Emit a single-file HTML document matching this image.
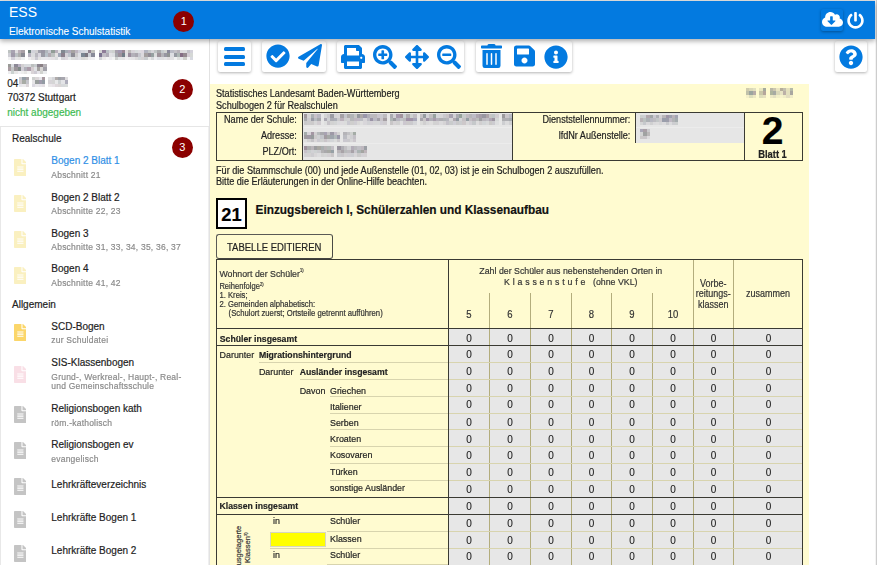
<!DOCTYPE html><html><head><meta charset="utf-8"><style>
html,body{margin:0;padding:0;}
body{width:877px;height:565px;overflow:hidden;position:relative;background:#fff;font-family:"Liberation Sans", sans-serif;}
.t{position:absolute;white-space:nowrap;-webkit-text-stroke:0.18px currentColor;}
svg{display:block}
</style></head><body><div style="position:absolute;left:0px;top:0px;width:877px;height:1px;background:#e4e4e4"></div><div style="position:absolute;left:875px;top:0px;width:1px;height:565px;background:#f3f3f3"></div><div style="position:absolute;left:876px;top:0px;width:1px;height:565px;background:#cdcdcd"></div><div style="position:absolute;left:209px;top:39px;width:1px;height:526px;background:#e2e2e2"></div><svg style="position:absolute;left:8px;top:49.7px;filter:blur(0.45px)" width="86.6" height="10.0" shape-rendering="crispEdges"><rect x="0.00" y="0.00" width="3.63" height="3.63" fill="rgb(189,194,193)"/><rect x="3.33" y="0.00" width="3.63" height="3.63" fill="rgb(168,163,177)"/><rect x="6.66" y="0.00" width="3.63" height="3.63" fill="rgb(224,222,224)"/><rect x="9.99" y="0.00" width="3.63" height="3.63" fill="rgb(187,177,184)"/><rect x="13.32" y="0.00" width="3.63" height="3.63" fill="rgb(168,160,166)"/><rect x="19.98" y="0.00" width="3.63" height="3.63" fill="rgb(112,129,128)"/><rect x="23.32" y="0.00" width="3.63" height="3.63" fill="rgb(210,211,218)"/><rect x="26.65" y="0.00" width="3.63" height="3.63" fill="rgb(210,209,211)"/><rect x="29.98" y="0.00" width="3.63" height="3.63" fill="rgb(162,161,171)"/><rect x="33.31" y="0.00" width="3.63" height="3.63" fill="rgb(153,150,164)"/><rect x="36.64" y="0.00" width="3.63" height="3.63" fill="rgb(177,182,188)"/><rect x="39.97" y="0.00" width="3.63" height="3.63" fill="rgb(203,202,210)"/><rect x="43.30" y="0.00" width="3.63" height="3.63" fill="rgb(145,157,150)"/><rect x="46.63" y="0.00" width="3.63" height="3.63" fill="rgb(186,178,188)"/><rect x="49.96" y="0.00" width="3.63" height="3.63" fill="rgb(225,225,227)"/><rect x="53.29" y="0.00" width="3.63" height="3.63" fill="rgb(129,136,145)"/><rect x="56.62" y="0.00" width="3.63" height="3.63" fill="rgb(165,170,180)"/><rect x="59.95" y="0.00" width="3.63" height="3.63" fill="rgb(179,170,186)"/><rect x="63.28" y="0.00" width="3.63" height="3.63" fill="rgb(167,163,162)"/><rect x="66.62" y="0.00" width="3.63" height="3.63" fill="rgb(189,180,191)"/><rect x="69.95" y="0.00" width="3.63" height="3.63" fill="rgb(207,206,216)"/><rect x="73.28" y="0.00" width="3.63" height="3.63" fill="rgb(213,213,220)"/><rect x="76.61" y="0.00" width="3.63" height="3.63" fill="rgb(219,220,225)"/><rect x="79.94" y="0.00" width="3.63" height="3.63" fill="rgb(147,133,147)"/><rect x="83.27" y="0.00" width="3.63" height="3.63" fill="rgb(194,194,190)"/><rect x="0.00" y="3.33" width="3.63" height="3.63" fill="rgb(207,207,213)"/><rect x="3.33" y="3.33" width="3.63" height="3.63" fill="rgb(161,155,170)"/><rect x="6.66" y="3.33" width="3.63" height="3.63" fill="rgb(189,193,196)"/><rect x="9.99" y="3.33" width="3.63" height="3.63" fill="rgb(174,174,172)"/><rect x="13.32" y="3.33" width="3.63" height="3.63" fill="rgb(137,138,147)"/><rect x="19.98" y="3.33" width="3.63" height="3.63" fill="rgb(185,180,193)"/><rect x="23.32" y="3.33" width="3.63" height="3.63" fill="rgb(219,220,222)"/><rect x="26.65" y="3.33" width="3.63" height="3.63" fill="rgb(186,185,192)"/><rect x="29.98" y="3.33" width="3.63" height="3.63" fill="rgb(217,214,223)"/><rect x="33.31" y="3.33" width="3.63" height="3.63" fill="rgb(156,156,166)"/><rect x="36.64" y="3.33" width="3.63" height="3.63" fill="rgb(184,192,200)"/><rect x="39.97" y="3.33" width="3.63" height="3.63" fill="rgb(178,171,178)"/><rect x="43.30" y="3.33" width="3.63" height="3.63" fill="rgb(189,194,192)"/><rect x="46.63" y="3.33" width="3.63" height="3.63" fill="rgb(228,226,226)"/><rect x="49.96" y="3.33" width="3.63" height="3.63" fill="rgb(162,169,183)"/><rect x="53.29" y="3.33" width="3.63" height="3.63" fill="rgb(139,128,141)"/><rect x="56.62" y="3.33" width="3.63" height="3.63" fill="rgb(213,210,216)"/><rect x="59.95" y="3.33" width="3.63" height="3.63" fill="rgb(190,195,203)"/><rect x="63.28" y="3.33" width="3.63" height="3.63" fill="rgb(143,141,150)"/><rect x="66.62" y="3.33" width="3.63" height="3.63" fill="rgb(204,202,203)"/><rect x="69.95" y="3.33" width="3.63" height="3.63" fill="rgb(224,224,229)"/><rect x="73.28" y="3.33" width="3.63" height="3.63" fill="rgb(123,133,146)"/><rect x="76.61" y="3.33" width="3.63" height="3.63" fill="rgb(122,117,128)"/><rect x="79.94" y="3.33" width="3.63" height="3.63" fill="rgb(205,208,214)"/><rect x="83.27" y="3.33" width="3.63" height="3.63" fill="rgb(137,139,153)"/><rect x="0.00" y="6.67" width="3.63" height="3.63" fill="rgb(241,241,242)"/><rect x="3.33" y="6.67" width="3.63" height="3.63" fill="rgb(211,208,217)"/><rect x="6.66" y="6.67" width="3.63" height="3.63" fill="rgb(231,231,231)"/><rect x="9.99" y="6.67" width="3.63" height="3.63" fill="rgb(229,227,227)"/><rect x="13.32" y="6.67" width="3.63" height="3.63" fill="rgb(238,240,241)"/><rect x="19.98" y="6.67" width="3.63" height="3.63" fill="rgb(239,239,240)"/><rect x="23.32" y="6.67" width="3.63" height="3.63" fill="rgb(229,227,229)"/><rect x="26.65" y="6.67" width="3.63" height="3.63" fill="rgb(203,202,210)"/><rect x="29.98" y="6.67" width="3.63" height="3.63" fill="rgb(227,227,226)"/><rect x="33.31" y="6.67" width="3.63" height="3.63" fill="rgb(232,232,235)"/><rect x="36.64" y="6.67" width="3.63" height="3.63" fill="rgb(233,231,236)"/><rect x="39.97" y="6.67" width="3.63" height="3.63" fill="rgb(229,229,233)"/><rect x="43.30" y="6.67" width="3.63" height="3.63" fill="rgb(228,225,228)"/><rect x="46.63" y="6.67" width="3.63" height="3.63" fill="rgb(218,221,222)"/><rect x="49.96" y="6.67" width="3.63" height="3.63" fill="rgb(244,243,245)"/><rect x="53.29" y="6.67" width="3.63" height="3.63" fill="rgb(213,211,216)"/><rect x="56.62" y="6.67" width="3.63" height="3.63" fill="rgb(222,217,223)"/><rect x="59.95" y="6.67" width="3.63" height="3.63" fill="rgb(232,234,235)"/><rect x="63.28" y="6.67" width="3.63" height="3.63" fill="rgb(221,222,222)"/><rect x="66.62" y="6.67" width="3.63" height="3.63" fill="rgb(218,217,222)"/><rect x="69.95" y="6.67" width="3.63" height="3.63" fill="rgb(225,224,229)"/><rect x="73.28" y="6.67" width="3.63" height="3.63" fill="rgb(217,216,215)"/><rect x="76.61" y="6.67" width="3.63" height="3.63" fill="rgb(223,221,220)"/><rect x="79.94" y="6.67" width="3.63" height="3.63" fill="rgb(239,237,239)"/><rect x="83.27" y="6.67" width="3.63" height="3.63" fill="rgb(241,241,243)"/></svg><svg style="position:absolute;left:99.2px;top:49.7px;filter:blur(0.45px)" width="94.2" height="10.0" shape-rendering="crispEdges"><rect x="0.00" y="0.00" width="3.55" height="3.63" fill="rgb(213,212,212)"/><rect x="3.25" y="0.00" width="3.55" height="3.63" fill="rgb(143,125,152)"/><rect x="6.50" y="0.00" width="3.55" height="3.63" fill="rgb(185,190,195)"/><rect x="9.74" y="0.00" width="3.55" height="3.63" fill="rgb(210,211,213)"/><rect x="12.99" y="0.00" width="3.55" height="3.63" fill="rgb(206,209,207)"/><rect x="16.24" y="0.00" width="3.55" height="3.63" fill="rgb(167,160,172)"/><rect x="19.49" y="0.00" width="3.55" height="3.63" fill="rgb(161,152,176)"/><rect x="22.74" y="0.00" width="3.55" height="3.63" fill="rgb(152,134,147)"/><rect x="25.99" y="0.00" width="3.55" height="3.63" fill="rgb(226,223,224)"/><rect x="29.23" y="0.00" width="3.55" height="3.63" fill="rgb(188,186,185)"/><rect x="32.48" y="0.00" width="3.55" height="3.63" fill="rgb(215,212,217)"/><rect x="35.73" y="0.00" width="3.55" height="3.63" fill="rgb(216,220,221)"/><rect x="38.98" y="0.00" width="3.55" height="3.63" fill="rgb(223,221,225)"/><rect x="42.23" y="0.00" width="3.55" height="3.63" fill="rgb(222,216,224)"/><rect x="45.48" y="0.00" width="3.55" height="3.63" fill="rgb(177,179,191)"/><rect x="48.72" y="0.00" width="3.55" height="3.63" fill="rgb(196,199,201)"/><rect x="51.97" y="0.00" width="3.55" height="3.63" fill="rgb(214,213,217)"/><rect x="55.22" y="0.00" width="3.55" height="3.63" fill="rgb(192,197,197)"/><rect x="58.47" y="0.00" width="3.55" height="3.63" fill="rgb(170,171,173)"/><rect x="61.72" y="0.00" width="3.55" height="3.63" fill="rgb(197,203,206)"/><rect x="64.97" y="0.00" width="3.55" height="3.63" fill="rgb(208,211,208)"/><rect x="68.21" y="0.00" width="3.55" height="3.63" fill="rgb(138,138,155)"/><rect x="71.46" y="0.00" width="3.55" height="3.63" fill="rgb(186,187,197)"/><rect x="74.71" y="0.00" width="3.55" height="3.63" fill="rgb(195,193,198)"/><rect x="77.96" y="0.00" width="3.55" height="3.63" fill="rgb(183,178,185)"/><rect x="81.21" y="0.00" width="3.55" height="3.63" fill="rgb(222,219,221)"/><rect x="84.46" y="0.00" width="3.55" height="3.63" fill="rgb(221,221,223)"/><rect x="87.70" y="0.00" width="3.55" height="3.63" fill="rgb(195,195,202)"/><rect x="90.95" y="0.00" width="3.55" height="3.63" fill="rgb(211,209,218)"/><rect x="0.00" y="3.33" width="3.55" height="3.63" fill="rgb(124,115,144)"/><rect x="3.25" y="3.33" width="3.55" height="3.63" fill="rgb(193,189,198)"/><rect x="6.50" y="3.33" width="3.55" height="3.63" fill="rgb(177,172,183)"/><rect x="9.74" y="3.33" width="3.55" height="3.63" fill="rgb(227,226,229)"/><rect x="12.99" y="3.33" width="3.55" height="3.63" fill="rgb(221,222,225)"/><rect x="16.24" y="3.33" width="3.55" height="3.63" fill="rgb(165,168,174)"/><rect x="19.49" y="3.33" width="3.55" height="3.63" fill="rgb(158,147,156)"/><rect x="22.74" y="3.33" width="3.55" height="3.63" fill="rgb(113,125,135)"/><rect x="25.99" y="3.33" width="3.55" height="3.63" fill="rgb(226,225,227)"/><rect x="29.23" y="3.33" width="3.55" height="3.63" fill="rgb(155,141,157)"/><rect x="32.48" y="3.33" width="3.55" height="3.63" fill="rgb(179,177,185)"/><rect x="35.73" y="3.33" width="3.55" height="3.63" fill="rgb(171,167,175)"/><rect x="38.98" y="3.33" width="3.55" height="3.63" fill="rgb(199,199,206)"/><rect x="42.23" y="3.33" width="3.55" height="3.63" fill="rgb(219,217,221)"/><rect x="45.48" y="3.33" width="3.55" height="3.63" fill="rgb(164,159,159)"/><rect x="48.72" y="3.33" width="3.55" height="3.63" fill="rgb(147,141,151)"/><rect x="51.97" y="3.33" width="3.55" height="3.63" fill="rgb(149,160,160)"/><rect x="55.22" y="3.33" width="3.55" height="3.63" fill="rgb(219,221,221)"/><rect x="58.47" y="3.33" width="3.55" height="3.63" fill="rgb(157,147,154)"/><rect x="61.72" y="3.33" width="3.55" height="3.63" fill="rgb(179,179,184)"/><rect x="64.97" y="3.33" width="3.55" height="3.63" fill="rgb(151,151,162)"/><rect x="68.21" y="3.33" width="3.55" height="3.63" fill="rgb(144,148,147)"/><rect x="71.46" y="3.33" width="3.55" height="3.63" fill="rgb(221,222,226)"/><rect x="74.71" y="3.33" width="3.55" height="3.63" fill="rgb(151,154,162)"/><rect x="77.96" y="3.33" width="3.55" height="3.63" fill="rgb(173,182,180)"/><rect x="81.21" y="3.33" width="3.55" height="3.63" fill="rgb(133,109,132)"/><rect x="84.46" y="3.33" width="3.55" height="3.63" fill="rgb(149,137,144)"/><rect x="87.70" y="3.33" width="3.55" height="3.63" fill="rgb(210,203,210)"/><rect x="90.95" y="3.33" width="3.55" height="3.63" fill="rgb(213,216,214)"/><rect x="0.00" y="6.67" width="3.55" height="3.63" fill="rgb(209,211,214)"/><rect x="3.25" y="6.67" width="3.55" height="3.63" fill="rgb(236,234,234)"/><rect x="6.50" y="6.67" width="3.55" height="3.63" fill="rgb(244,244,244)"/><rect x="9.74" y="6.67" width="3.55" height="3.63" fill="rgb(238,237,240)"/><rect x="12.99" y="6.67" width="3.55" height="3.63" fill="rgb(244,245,244)"/><rect x="16.24" y="6.67" width="3.55" height="3.63" fill="rgb(206,207,206)"/><rect x="19.49" y="6.67" width="3.55" height="3.63" fill="rgb(227,230,230)"/><rect x="22.74" y="6.67" width="3.55" height="3.63" fill="rgb(228,227,228)"/><rect x="25.99" y="6.67" width="3.55" height="3.63" fill="rgb(241,239,242)"/><rect x="29.23" y="6.67" width="3.55" height="3.63" fill="rgb(232,233,234)"/><rect x="32.48" y="6.67" width="3.55" height="3.63" fill="rgb(230,229,231)"/><rect x="35.73" y="6.67" width="3.55" height="3.63" fill="rgb(220,219,220)"/><rect x="38.98" y="6.67" width="3.55" height="3.63" fill="rgb(209,214,216)"/><rect x="42.23" y="6.67" width="3.55" height="3.63" fill="rgb(213,209,211)"/><rect x="45.48" y="6.67" width="3.55" height="3.63" fill="rgb(200,203,206)"/><rect x="48.72" y="6.67" width="3.55" height="3.63" fill="rgb(232,233,232)"/><rect x="51.97" y="6.67" width="3.55" height="3.63" fill="rgb(214,216,218)"/><rect x="55.22" y="6.67" width="3.55" height="3.63" fill="rgb(236,236,239)"/><rect x="58.47" y="6.67" width="3.55" height="3.63" fill="rgb(221,224,228)"/><rect x="61.72" y="6.67" width="3.55" height="3.63" fill="rgb(223,223,225)"/><rect x="64.97" y="6.67" width="3.55" height="3.63" fill="rgb(227,228,230)"/><rect x="68.21" y="6.67" width="3.55" height="3.63" fill="rgb(222,220,222)"/><rect x="71.46" y="6.67" width="3.55" height="3.63" fill="rgb(226,225,227)"/><rect x="74.71" y="6.67" width="3.55" height="3.63" fill="rgb(241,242,242)"/><rect x="77.96" y="6.67" width="3.55" height="3.63" fill="rgb(223,224,223)"/><rect x="81.21" y="6.67" width="3.55" height="3.63" fill="rgb(231,232,234)"/><rect x="84.46" y="6.67" width="3.55" height="3.63" fill="rgb(206,206,202)"/><rect x="87.70" y="6.67" width="3.55" height="3.63" fill="rgb(243,243,244)"/><rect x="90.95" y="6.67" width="3.55" height="3.63" fill="rgb(215,217,224)"/></svg><svg style="position:absolute;left:8px;top:64px;filter:blur(0.45px)" width="38.7" height="10.0" shape-rendering="crispEdges"><rect x="0.00" y="0.00" width="3.52" height="3.63" fill="rgb(154,155,151)"/><rect x="3.23" y="0.00" width="3.52" height="3.63" fill="rgb(217,219,223)"/><rect x="6.45" y="0.00" width="3.52" height="3.63" fill="rgb(140,137,150)"/><rect x="9.68" y="0.00" width="3.52" height="3.63" fill="rgb(185,177,193)"/><rect x="12.90" y="0.00" width="3.52" height="3.63" fill="rgb(210,208,209)"/><rect x="16.12" y="0.00" width="3.52" height="3.63" fill="rgb(216,218,222)"/><rect x="19.35" y="0.00" width="3.52" height="3.63" fill="rgb(216,219,222)"/><rect x="22.57" y="0.00" width="3.52" height="3.63" fill="rgb(188,192,191)"/><rect x="25.80" y="0.00" width="3.52" height="3.63" fill="rgb(200,204,206)"/><rect x="29.03" y="0.00" width="3.52" height="3.63" fill="rgb(141,134,145)"/><rect x="32.25" y="0.00" width="3.52" height="3.63" fill="rgb(138,128,132)"/><rect x="35.48" y="0.00" width="3.52" height="3.63" fill="rgb(182,178,183)"/><rect x="0.00" y="3.33" width="3.52" height="3.63" fill="rgb(170,157,162)"/><rect x="3.23" y="3.33" width="3.52" height="3.63" fill="rgb(195,197,198)"/><rect x="6.45" y="3.33" width="3.52" height="3.63" fill="rgb(155,149,153)"/><rect x="9.68" y="3.33" width="3.52" height="3.63" fill="rgb(128,138,136)"/><rect x="12.90" y="3.33" width="3.52" height="3.63" fill="rgb(210,206,215)"/><rect x="16.12" y="3.33" width="3.52" height="3.63" fill="rgb(176,176,185)"/><rect x="19.35" y="3.33" width="3.52" height="3.63" fill="rgb(171,156,169)"/><rect x="22.57" y="3.33" width="3.52" height="3.63" fill="rgb(213,205,209)"/><rect x="25.80" y="3.33" width="3.52" height="3.63" fill="rgb(224,226,229)"/><rect x="29.03" y="3.33" width="3.52" height="3.63" fill="rgb(165,163,161)"/><rect x="32.25" y="3.33" width="3.52" height="3.63" fill="rgb(215,213,211)"/><rect x="35.48" y="3.33" width="3.52" height="3.63" fill="rgb(161,160,168)"/><rect x="0.00" y="6.67" width="3.52" height="3.63" fill="rgb(237,237,239)"/><rect x="3.23" y="6.67" width="3.52" height="3.63" fill="rgb(203,210,208)"/><rect x="6.45" y="6.67" width="3.52" height="3.63" fill="rgb(232,232,232)"/><rect x="9.68" y="6.67" width="3.52" height="3.63" fill="rgb(243,242,245)"/><rect x="12.90" y="6.67" width="3.52" height="3.63" fill="rgb(237,238,237)"/><rect x="16.12" y="6.67" width="3.52" height="3.63" fill="rgb(230,229,228)"/><rect x="19.35" y="6.67" width="3.52" height="3.63" fill="rgb(243,244,244)"/><rect x="22.57" y="6.67" width="3.52" height="3.63" fill="rgb(218,213,216)"/><rect x="25.80" y="6.67" width="3.52" height="3.63" fill="rgb(207,204,212)"/><rect x="29.03" y="6.67" width="3.52" height="3.63" fill="rgb(231,230,235)"/><rect x="32.25" y="6.67" width="3.52" height="3.63" fill="rgb(209,211,207)"/><rect x="35.48" y="6.67" width="3.52" height="3.63" fill="rgb(235,237,238)"/></svg><svg style="position:absolute;left:19.4px;top:77px;filter:blur(0.45px)" width="49.0" height="10.0" shape-rendering="crispEdges"><rect x="0.00" y="0.00" width="3.57" height="3.63" fill="rgb(199,200,205)"/><rect x="3.27" y="0.00" width="3.57" height="3.63" fill="rgb(149,159,167)"/><rect x="6.53" y="0.00" width="3.57" height="3.63" fill="rgb(168,164,168)"/><rect x="13.07" y="0.00" width="3.57" height="3.63" fill="rgb(206,209,207)"/><rect x="16.33" y="0.00" width="3.57" height="3.63" fill="rgb(219,215,217)"/><rect x="19.60" y="0.00" width="3.57" height="3.63" fill="rgb(231,230,235)"/><rect x="22.87" y="0.00" width="3.57" height="3.63" fill="rgb(167,153,159)"/><rect x="29.40" y="0.00" width="3.57" height="3.63" fill="rgb(226,227,228)"/><rect x="32.67" y="0.00" width="3.57" height="3.63" fill="rgb(213,214,218)"/><rect x="35.93" y="0.00" width="3.57" height="3.63" fill="rgb(176,172,171)"/><rect x="39.20" y="0.00" width="3.57" height="3.63" fill="rgb(159,162,167)"/><rect x="42.47" y="0.00" width="3.57" height="3.63" fill="rgb(167,166,174)"/><rect x="45.73" y="0.00" width="3.57" height="3.63" fill="rgb(223,221,223)"/><rect x="0.00" y="3.33" width="3.57" height="3.63" fill="rgb(205,200,202)"/><rect x="3.27" y="3.33" width="3.57" height="3.63" fill="rgb(168,172,166)"/><rect x="6.53" y="3.33" width="3.57" height="3.63" fill="rgb(197,197,203)"/><rect x="13.07" y="3.33" width="3.57" height="3.63" fill="rgb(230,229,231)"/><rect x="16.33" y="3.33" width="3.57" height="3.63" fill="rgb(153,158,157)"/><rect x="19.60" y="3.33" width="3.57" height="3.63" fill="rgb(159,155,172)"/><rect x="22.87" y="3.33" width="3.57" height="3.63" fill="rgb(146,154,163)"/><rect x="29.40" y="3.33" width="3.57" height="3.63" fill="rgb(215,212,216)"/><rect x="32.67" y="3.33" width="3.57" height="3.63" fill="rgb(213,213,213)"/><rect x="35.93" y="3.33" width="3.57" height="3.63" fill="rgb(232,233,234)"/><rect x="39.20" y="3.33" width="3.57" height="3.63" fill="rgb(205,209,211)"/><rect x="42.47" y="3.33" width="3.57" height="3.63" fill="rgb(227,228,231)"/><rect x="45.73" y="3.33" width="3.57" height="3.63" fill="rgb(174,174,188)"/><rect x="0.00" y="6.67" width="3.57" height="3.63" fill="rgb(231,231,236)"/><rect x="3.27" y="6.67" width="3.57" height="3.63" fill="rgb(236,235,237)"/><rect x="6.53" y="6.67" width="3.57" height="3.63" fill="rgb(220,215,218)"/><rect x="13.07" y="6.67" width="3.57" height="3.63" fill="rgb(220,218,226)"/><rect x="16.33" y="6.67" width="3.57" height="3.63" fill="rgb(233,231,235)"/><rect x="19.60" y="6.67" width="3.57" height="3.63" fill="rgb(229,228,233)"/><rect x="22.87" y="6.67" width="3.57" height="3.63" fill="rgb(227,222,227)"/><rect x="29.40" y="6.67" width="3.57" height="3.63" fill="rgb(234,232,234)"/><rect x="32.67" y="6.67" width="3.57" height="3.63" fill="rgb(231,226,231)"/><rect x="35.93" y="6.67" width="3.57" height="3.63" fill="rgb(222,216,219)"/><rect x="39.20" y="6.67" width="3.57" height="3.63" fill="rgb(218,214,214)"/><rect x="42.47" y="6.67" width="3.57" height="3.63" fill="rgb(214,217,219)"/><rect x="45.73" y="6.67" width="3.57" height="3.63" fill="rgb(216,220,219)"/></svg><div class="t" style="left:7.20px;top:78.83px;font-size:10px;line-height:10.0px;color:#222;font-weight:400;">04</div><div class="t" style="left:7.50px;top:92.83px;font-size:10px;line-height:10.0px;color:#222;font-weight:400;">70372 Stuttgart</div><div class="t" style="left:7.20px;top:107.83px;font-size:10px;line-height:10.0px;color:#3dbb52;font-weight:400;">nicht abgegeben</div><div style="position:absolute;left:0px;top:126px;width:209px;height:1px;background:#e6e6e6"></div><div style="position:absolute;left:0px;top:127px;width:1px;height:438px;background:#e8e8e8"></div><div style="position:absolute;left:208px;top:127px;width:1px;height:438px;background:#efefef"></div><div class="t" style="left:12.00px;top:133.84px;font-size:10px;line-height:10.0px;color:#222;font-weight:400;">Realschule</div><div class="t" style="left:51.30px;top:155.84px;font-size:10px;line-height:10.0px;color:#2f8fe6;font-weight:400;">Bogen 2 Blatt 1</div><div class="t" style="left:51.30px;top:171.10px;font-size:8.5px;line-height:8.5px;color:#8a8a8a;font-weight:400;letter-spacing:0.22px;transform:scaleY(1.1);transform-origin:0 7.20px;">Abschnitt 21</div><svg style="position:absolute;left:13.6px;top:158.7px" width="12.75" height="17" viewBox="0 0 384 512"><path fill="#faf0c0" d="M224 136V0H24C10.7 0 0 10.7 0 24v464c0 13.3 10.7 24 24 24h336c13.3 0 24-10.7 24-24V160H248c-13.2 0-24-10.8-24-24zm64 236c0 6.6-5.4 12-12 12H108c-6.6 0-12-5.4-12-12v-8c0-6.6 5.4-12 12-12h168c6.6 0 12 5.4 12 12v8zm0-64c0 6.6-5.4 12-12 12H108c-6.6 0-12-5.4-12-12v-8c0-6.6 5.4-12 12-12h168c6.6 0 12 5.4 12 12v8zm0-72v8c0 6.6-5.4 12-12 12H108c-6.6 0-12-5.4-12-12v-8c0-6.6 5.4-12 12-12h168c6.6 0 12 5.4 12 12zm96-114.1v6.1H256V0h6.1c6.4 0 12.5 2.5 17 7l97.9 98c4.5 4.5 7 10.6 7 16.9z"/></svg><div class="t" style="left:51.30px;top:192.84px;font-size:10px;line-height:10.0px;color:#222;font-weight:400;">Bogen 2 Blatt 2</div><div class="t" style="left:51.30px;top:207.10px;font-size:8.5px;line-height:8.5px;color:#8a8a8a;font-weight:400;letter-spacing:0.22px;transform:scaleY(1.1);transform-origin:0 7.20px;">Abschnitte 22, 23</div><svg style="position:absolute;left:13.6px;top:194.6px" width="12.75" height="17" viewBox="0 0 384 512"><path fill="#faf0c0" d="M224 136V0H24C10.7 0 0 10.7 0 24v464c0 13.3 10.7 24 24 24h336c13.3 0 24-10.7 24-24V160H248c-13.2 0-24-10.8-24-24zm64 236c0 6.6-5.4 12-12 12H108c-6.6 0-12-5.4-12-12v-8c0-6.6 5.4-12 12-12h168c6.6 0 12 5.4 12 12v8zm0-64c0 6.6-5.4 12-12 12H108c-6.6 0-12-5.4-12-12v-8c0-6.6 5.4-12 12-12h168c6.6 0 12 5.4 12 12v8zm0-72v8c0 6.6-5.4 12-12 12H108c-6.6 0-12-5.4-12-12v-8c0-6.6 5.4-12 12-12h168c6.6 0 12 5.4 12 12zm96-114.1v6.1H256V0h6.1c6.4 0 12.5 2.5 17 7l97.9 98c4.5 4.5 7 10.6 7 16.9z"/></svg><div class="t" style="left:51.30px;top:228.84px;font-size:10px;line-height:10.0px;color:#222;font-weight:400;">Bogen 3</div><div class="t" style="left:51.30px;top:243.10px;font-size:8.5px;line-height:8.5px;color:#8a8a8a;font-weight:400;letter-spacing:0.22px;transform:scaleY(1.1);transform-origin:0 7.20px;">Abschnitte 31, 33, 34, 35, 36, 37</div><svg style="position:absolute;left:13.6px;top:230.5px" width="12.75" height="17" viewBox="0 0 384 512"><path fill="#faf0c0" d="M224 136V0H24C10.7 0 0 10.7 0 24v464c0 13.3 10.7 24 24 24h336c13.3 0 24-10.7 24-24V160H248c-13.2 0-24-10.8-24-24zm64 236c0 6.6-5.4 12-12 12H108c-6.6 0-12-5.4-12-12v-8c0-6.6 5.4-12 12-12h168c6.6 0 12 5.4 12 12v8zm0-64c0 6.6-5.4 12-12 12H108c-6.6 0-12-5.4-12-12v-8c0-6.6 5.4-12 12-12h168c6.6 0 12 5.4 12 12v8zm0-72v8c0 6.6-5.4 12-12 12H108c-6.6 0-12-5.4-12-12v-8c0-6.6 5.4-12 12-12h168c6.6 0 12 5.4 12 12zm96-114.1v6.1H256V0h6.1c6.4 0 12.5 2.5 17 7l97.9 98c4.5 4.5 7 10.6 7 16.9z"/></svg><div class="t" style="left:51.30px;top:263.84px;font-size:10px;line-height:10.0px;color:#222;font-weight:400;">Bogen 4</div><div class="t" style="left:51.30px;top:279.10px;font-size:8.5px;line-height:8.5px;color:#8a8a8a;font-weight:400;letter-spacing:0.22px;transform:scaleY(1.1);transform-origin:0 7.20px;">Abschnitte 41, 42</div><svg style="position:absolute;left:13.6px;top:266.5px" width="12.75" height="17" viewBox="0 0 384 512"><path fill="#faf0c0" d="M224 136V0H24C10.7 0 0 10.7 0 24v464c0 13.3 10.7 24 24 24h336c13.3 0 24-10.7 24-24V160H248c-13.2 0-24-10.8-24-24zm64 236c0 6.6-5.4 12-12 12H108c-6.6 0-12-5.4-12-12v-8c0-6.6 5.4-12 12-12h168c6.6 0 12 5.4 12 12v8zm0-64c0 6.6-5.4 12-12 12H108c-6.6 0-12-5.4-12-12v-8c0-6.6 5.4-12 12-12h168c6.6 0 12 5.4 12 12v8zm0-72v8c0 6.6-5.4 12-12 12H108c-6.6 0-12-5.4-12-12v-8c0-6.6 5.4-12 12-12h168c6.6 0 12 5.4 12 12zm96-114.1v6.1H256V0h6.1c6.4 0 12.5 2.5 17 7l97.9 98c4.5 4.5 7 10.6 7 16.9z"/></svg><div class="t" style="left:12.00px;top:299.84px;font-size:10px;line-height:10.0px;color:#222;font-weight:400;">Allgemein</div><div class="t" style="left:51.30px;top:321.84px;font-size:10px;line-height:10.0px;color:#222;font-weight:400;">SCD-Bogen</div><div class="t" style="left:51.30px;top:336.10px;font-size:8.5px;line-height:8.5px;color:#8a8a8a;font-weight:400;letter-spacing:0.22px;transform:scaleY(1.1);transform-origin:0 7.20px;">zur Schuldatei</div><svg style="position:absolute;left:13.6px;top:324px" width="12.75" height="17" viewBox="0 0 384 512"><path fill="#fbd66a" d="M224 136V0H24C10.7 0 0 10.7 0 24v464c0 13.3 10.7 24 24 24h336c13.3 0 24-10.7 24-24V160H248c-13.2 0-24-10.8-24-24zm64 236c0 6.6-5.4 12-12 12H108c-6.6 0-12-5.4-12-12v-8c0-6.6 5.4-12 12-12h168c6.6 0 12 5.4 12 12v8zm0-64c0 6.6-5.4 12-12 12H108c-6.6 0-12-5.4-12-12v-8c0-6.6 5.4-12 12-12h168c6.6 0 12 5.4 12 12v8zm0-72v8c0 6.6-5.4 12-12 12H108c-6.6 0-12-5.4-12-12v-8c0-6.6 5.4-12 12-12h168c6.6 0 12 5.4 12 12zm96-114.1v6.1H256V0h6.1c6.4 0 12.5 2.5 17 7l97.9 98c4.5 4.5 7 10.6 7 16.9z"/></svg><div class="t" style="left:51.30px;top:357.84px;font-size:10px;line-height:10.0px;color:#222;font-weight:400;">SIS-Klassenbogen</div><div class="t" style="left:51.30px;top:373.10px;font-size:8.5px;line-height:8.5px;color:#8a8a8a;font-weight:400;letter-spacing:0.22px;transform:scaleY(1.1);transform-origin:0 7.20px;">Grund-, Werkreal-, Haupt-, Real-</div><div class="t" style="left:51.30px;top:382.10px;font-size:8.5px;line-height:8.5px;color:#8a8a8a;font-weight:400;letter-spacing:0.22px;transform:scaleY(1.1);transform-origin:0 7.20px;">und Gemeinschaftsschule</div><svg style="position:absolute;left:13.6px;top:366px" width="12.75" height="17" viewBox="0 0 384 512"><path fill="#f9dfe6" d="M224 136V0H24C10.7 0 0 10.7 0 24v464c0 13.3 10.7 24 24 24h336c13.3 0 24-10.7 24-24V160H248c-13.2 0-24-10.8-24-24zm64 236c0 6.6-5.4 12-12 12H108c-6.6 0-12-5.4-12-12v-8c0-6.6 5.4-12 12-12h168c6.6 0 12 5.4 12 12v8zm0-64c0 6.6-5.4 12-12 12H108c-6.6 0-12-5.4-12-12v-8c0-6.6 5.4-12 12-12h168c6.6 0 12 5.4 12 12v8zm0-72v8c0 6.6-5.4 12-12 12H108c-6.6 0-12-5.4-12-12v-8c0-6.6 5.4-12 12-12h168c6.6 0 12 5.4 12 12zm96-114.1v6.1H256V0h6.1c6.4 0 12.5 2.5 17 7l97.9 98c4.5 4.5 7 10.6 7 16.9z"/></svg><div class="t" style="left:51.30px;top:403.84px;font-size:10px;line-height:10.0px;color:#222;font-weight:400;">Religionsbogen kath</div><div class="t" style="left:51.30px;top:419.10px;font-size:8.5px;line-height:8.5px;color:#8a8a8a;font-weight:400;letter-spacing:0.22px;transform:scaleY(1.1);transform-origin:0 7.20px;">röm.-katholisch</div><svg style="position:absolute;left:13.6px;top:406px" width="12.75" height="17" viewBox="0 0 384 512"><path fill="#c4c4c4" d="M224 136V0H24C10.7 0 0 10.7 0 24v464c0 13.3 10.7 24 24 24h336c13.3 0 24-10.7 24-24V160H248c-13.2 0-24-10.8-24-24zm64 236c0 6.6-5.4 12-12 12H108c-6.6 0-12-5.4-12-12v-8c0-6.6 5.4-12 12-12h168c6.6 0 12 5.4 12 12v8zm0-64c0 6.6-5.4 12-12 12H108c-6.6 0-12-5.4-12-12v-8c0-6.6 5.4-12 12-12h168c6.6 0 12 5.4 12 12v8zm0-72v8c0 6.6-5.4 12-12 12H108c-6.6 0-12-5.4-12-12v-8c0-6.6 5.4-12 12-12h168c6.6 0 12 5.4 12 12zm96-114.1v6.1H256V0h6.1c6.4 0 12.5 2.5 17 7l97.9 98c4.5 4.5 7 10.6 7 16.9z"/></svg><div class="t" style="left:51.30px;top:439.84px;font-size:10px;line-height:10.0px;color:#222;font-weight:400;">Religionsbogen ev</div><div class="t" style="left:51.30px;top:455.10px;font-size:8.5px;line-height:8.5px;color:#8a8a8a;font-weight:400;letter-spacing:0.22px;transform:scaleY(1.1);transform-origin:0 7.20px;">evangelisch</div><svg style="position:absolute;left:13.6px;top:442px" width="12.75" height="17" viewBox="0 0 384 512"><path fill="#c4c4c4" d="M224 136V0H24C10.7 0 0 10.7 0 24v464c0 13.3 10.7 24 24 24h336c13.3 0 24-10.7 24-24V160H248c-13.2 0-24-10.8-24-24zm64 236c0 6.6-5.4 12-12 12H108c-6.6 0-12-5.4-12-12v-8c0-6.6 5.4-12 12-12h168c6.6 0 12 5.4 12 12v8zm0-64c0 6.6-5.4 12-12 12H108c-6.6 0-12-5.4-12-12v-8c0-6.6 5.4-12 12-12h168c6.6 0 12 5.4 12 12v8zm0-72v8c0 6.6-5.4 12-12 12H108c-6.6 0-12-5.4-12-12v-8c0-6.6 5.4-12 12-12h168c6.6 0 12 5.4 12 12zm96-114.1v6.1H256V0h6.1c6.4 0 12.5 2.5 17 7l97.9 98c4.5 4.5 7 10.6 7 16.9z"/></svg><div class="t" style="left:51.30px;top:479.84px;font-size:10px;line-height:10.0px;color:#222;font-weight:400;">Lehrkräfteverzeichnis</div><svg style="position:absolute;left:13.6px;top:477.5px" width="12.75" height="17" viewBox="0 0 384 512"><path fill="#c4c4c4" d="M224 136V0H24C10.7 0 0 10.7 0 24v464c0 13.3 10.7 24 24 24h336c13.3 0 24-10.7 24-24V160H248c-13.2 0-24-10.8-24-24zm64 236c0 6.6-5.4 12-12 12H108c-6.6 0-12-5.4-12-12v-8c0-6.6 5.4-12 12-12h168c6.6 0 12 5.4 12 12v8zm0-64c0 6.6-5.4 12-12 12H108c-6.6 0-12-5.4-12-12v-8c0-6.6 5.4-12 12-12h168c6.6 0 12 5.4 12 12v8zm0-72v8c0 6.6-5.4 12-12 12H108c-6.6 0-12-5.4-12-12v-8c0-6.6 5.4-12 12-12h168c6.6 0 12 5.4 12 12zm96-114.1v6.1H256V0h6.1c6.4 0 12.5 2.5 17 7l97.9 98c4.5 4.5 7 10.6 7 16.9z"/></svg><div class="t" style="left:51.30px;top:512.83px;font-size:10px;line-height:10.0px;color:#222;font-weight:400;">Lehrkräfte Bogen 1</div><svg style="position:absolute;left:13.6px;top:511px" width="12.75" height="17" viewBox="0 0 384 512"><path fill="#c4c4c4" d="M224 136V0H24C10.7 0 0 10.7 0 24v464c0 13.3 10.7 24 24 24h336c13.3 0 24-10.7 24-24V160H248c-13.2 0-24-10.8-24-24zm64 236c0 6.6-5.4 12-12 12H108c-6.6 0-12-5.4-12-12v-8c0-6.6 5.4-12 12-12h168c6.6 0 12 5.4 12 12v8zm0-64c0 6.6-5.4 12-12 12H108c-6.6 0-12-5.4-12-12v-8c0-6.6 5.4-12 12-12h168c6.6 0 12 5.4 12 12v8zm0-72v8c0 6.6-5.4 12-12 12H108c-6.6 0-12-5.4-12-12v-8c0-6.6 5.4-12 12-12h168c6.6 0 12 5.4 12 12zm96-114.1v6.1H256V0h6.1c6.4 0 12.5 2.5 17 7l97.9 98c4.5 4.5 7 10.6 7 16.9z"/></svg><div class="t" style="left:51.30px;top:545.83px;font-size:10px;line-height:10.0px;color:#222;font-weight:400;">Lehrkräfte Bogen 2</div><svg style="position:absolute;left:13.6px;top:545px" width="12.75" height="17" viewBox="0 0 384 512"><path fill="#c4c4c4" d="M224 136V0H24C10.7 0 0 10.7 0 24v464c0 13.3 10.7 24 24 24h336c13.3 0 24-10.7 24-24V160H248c-13.2 0-24-10.8-24-24zm64 236c0 6.6-5.4 12-12 12H108c-6.6 0-12-5.4-12-12v-8c0-6.6 5.4-12 12-12h168c6.6 0 12 5.4 12 12v8zm0-64c0 6.6-5.4 12-12 12H108c-6.6 0-12-5.4-12-12v-8c0-6.6 5.4-12 12-12h168c6.6 0 12 5.4 12 12v8zm0-72v8c0 6.6-5.4 12-12 12H108c-6.6 0-12-5.4-12-12v-8c0-6.6 5.4-12 12-12h168c6.6 0 12 5.4 12 12zm96-114.1v6.1H256V0h6.1c6.4 0 12.5 2.5 17 7l97.9 98c4.5 4.5 7 10.6 7 16.9z"/></svg><div style="position:absolute;left:0px;top:1px;width:875px;height:38px;background:#037ae0;box-shadow:0 2px 5px rgba(0,0,0,.34);z-index:2"></div><div style="position:absolute;left:0;top:0;width:877px;height:40px;z-index:3"><div class="t" style="left:9.00px;top:5.45px;font-size:14px;line-height:14.0px;color:#fff;font-weight:400;-webkit-text-stroke:0;">ESS</div><div class="t" style="left:9.00px;top:26.83px;font-size:10px;line-height:10.0px;color:#fff;font-weight:400;-webkit-text-stroke:0.1px #fff;">Elektronische Schulstatistik</div></div><div style="position:absolute;left:173.3px;top:10.5px;width:21px;height:21px;border-radius:50%;background:#8b0000;z-index:4"></div><div class="t" style="left:173.3px;top:10.5px;width:21px;line-height:21px;text-align:center;font-size:11px;color:#fff;z-index:4;-webkit-text-stroke:0">1</div><div style="position:absolute;left:171.9px;top:79.1px;width:21px;height:21px;border-radius:50%;background:#8b0000;z-index:4"></div><div class="t" style="left:171.9px;top:79.1px;width:21px;line-height:21px;text-align:center;font-size:11px;color:#fff;z-index:4;-webkit-text-stroke:0">2</div><div style="position:absolute;left:171.9px;top:136.7px;width:21px;height:21px;border-radius:50%;background:#8b0000;z-index:4"></div><div class="t" style="left:171.9px;top:136.7px;width:21px;line-height:21px;text-align:center;font-size:11px;color:#fff;z-index:4;-webkit-text-stroke:0">3</div><div style="position:absolute;left:821px;top:9px;width:22px;height:22px;background:#037ae0;box-shadow:0 1px 3px rgba(0,0,0,.35);border-radius:2px;z-index:4"></div><svg style="position:absolute;left:821.5px;top:11.4px;z-index:5" width="21" height="16.8" viewBox="0 0 640 512"><path fill="#fff" d="M537.6 226.6c4.1-10.7 6.4-22.4 6.4-34.6 0-53-43-96-96-96-19.7 0-38.1 6-53.3 16.2C367 64.2 315.3 32 256 32c-88.4 0-160 71.6-160 160 0 2.7.1 5.4.2 8.1C40.2 219.8 0 273.2 0 336c0 79.5 64.5 144 144 144h368c70.7 0 128-57.3 128-128 0-61.9-44-113.6-102.4-125.4zm-132.9 88.7L299.3 420.700c-6.2 6.2-16.4 6.2-22.6 0L171.3 315.3c-10.1-10.1-2.9-27.3 11.3-27.3H248V176c0-8.8 7.2-16 16-16h48c8.8 0 16 7.2 16 16v112h65.4c14.2 0 21.4 17.2 11.3 27.3z"/></svg><svg style="position:absolute;left:846.7px;top:11.6px;z-index:5" width="17" height="17" viewBox="0 0 512 512"><path fill="#fff" d="M400 54.1c63 45 104 118.6 104 201.9 0 136.8-110.8 247.7-247.5 248C120 504.3 8.2 393 8 256.4 7.9 173.1 48.9 99.3 111.8 54.2c11.7-8.3 28-4.8 35 7.7L162.6 90c5.9 10.5 3.1 23.8-6.6 31-41.5 30.8-68 79.6-68 134.9-.1 92.3 74.5 168.1 168 168.1 91.6 0 168.6-74.2 168-169.1-.3-51.8-24.7-101.8-68.1-134-9.7-7.2-12.4-20.5-6.5-30.9l15.8-28.1c7-12.4 23.2-16.1 34.8-7.8zM296 264V24c0-13.3-10.7-24-24-24h-32c-13.3 0-24 10.7-24 24v240c0 13.3 10.7 24 24 24h32c13.3 0 24-10.7 24-24z"/></svg><div style="position:absolute;left:218.4px;top:41px;width:32.599999999999994px;height:31.299999999999997px;background:#fff;border-radius:2px;box-shadow:0 1px 3px rgba(0,0,0,.3)"></div><div style="position:absolute;left:262px;top:41px;width:63.60000000000002px;height:31.299999999999997px;background:#fff;border-radius:2px;box-shadow:0 1px 3px rgba(0,0,0,.3)"></div><div style="position:absolute;left:337px;top:41px;width:127.39999999999998px;height:31.299999999999997px;background:#fff;border-radius:2px;box-shadow:0 1px 3px rgba(0,0,0,.3)"></div><div style="position:absolute;left:476px;top:41px;width:95.70000000000005px;height:31.299999999999997px;background:#fff;border-radius:2px;box-shadow:0 1px 3px rgba(0,0,0,.3)"></div><div style="position:absolute;left:834.8px;top:41.4px;width:32.200000000000045px;height:30.800000000000004px;background:#fff;border-radius:2px;box-shadow:0 1px 3px rgba(0,0,0,.3)"></div><div style="position:absolute;left:224px;top:47.2px;width:21px;height:3.6px;background:#037ae0;border-radius:1.5px"></div><div style="position:absolute;left:224px;top:55px;width:21px;height:3.6px;background:#037ae0;border-radius:1.5px"></div><div style="position:absolute;left:224px;top:62.3px;width:21px;height:3.6px;background:#037ae0;border-radius:1.5px"></div><svg style="position:absolute;left:265.7px;top:44.4px" width="24" height="24" viewBox="0 0 512 512"><path fill="#037ae0" d="M504 256c0 136.967-111.033 248-248 248S8 392.967 8 256 119.033 8 256 8s248 111.033 248 248zM227.314 387.314l184-184c6.248-6.248 6.248-16.379 0-22.627l-22.627-22.627c-6.248-6.249-16.379-6.249-22.628 0L216 308.118l-70.059-70.059c-6.248-6.248-16.379-6.248-22.628 0l-22.627 22.627c-6.248 6.248-6.248 16.379 0 22.627l104 104c6.249 6.249 16.379 6.249 22.628.001z"/></svg><svg style="position:absolute;left:297.8px;top:44.4px" width="24" height="24" viewBox="0 0 512 512"><path fill="#037ae0" d="M476 3.2L12.5 270.6c-18.1 10.4-15.8 35.6 2.2 43.2L121 358.4l287.3-253.2c5.5-4.9 13.3 2.6 8.6 8.3L176 407v80.5c0 23.6 28.5 32.9 42.5 15.8L282 426l124.6 52.2c14.2 6 30.4-2.9 33-18.2l72-432C515 7.8 493.3-6.8 476 3.2z"/></svg><svg style="position:absolute;left:341px;top:44.5px" width="24" height="24" viewBox="0 0 512 512"><path fill="#037ae0" d="M448 192V77.25c0-8.49-3.37-16.62-9.37-22.63L393.37 9.37c-6-6-14.14-9.37-22.63-9.37H96C78.33 0 64 14.33 64 32v160c-35.35 0-64 28.65-64 64v112c0 8.84 7.16 16 16 16h48v96c0 17.670 14.33 32 32 32h320c17.67 0 32-14.33 32-32v-96h48c8.84 0 16-7.16 16-16V256c0-35.35-28.65-64-64-64zm-64 256H128v-96h256v96zm0-224H128V64h192v48c0 8.84 7.16 16 16 16h48v96zm48 72c-13.25 0-24-10.75-24-24 0-13.26 10.75-24 24-24s24 10.74 24 24c0 13.25-10.75 24-24 24z"/></svg><svg style="position:absolute;left:372.9px;top:44.5px" width="24" height="24" viewBox="0 0 512 512"><path fill="#037ae0" d="M304 192v32c0 6.6-5.4 12-12 12h-56v56c0 6.6-5.4 12-12 12h-32c-6.6 0-12-5.4-12-12v-56h-56c-6.6 0-12-5.4-12-12v-32c0-6.6 5.4-12 12-12h56v-56c0-6.6 5.4-12 12-12h32c6.6 0 12 5.4 12 12v56h56c6.6 0 12 5.4 12 12zm201 284.7L476.7 505c-9.4 9.4-24.6 9.4-33.9 0L343 405.3c-4.5-4.5-7-10.6-7-17V372c-35.3 27.600-79.7 44-128 44C93.1 416 0 322.9 0 208S93.1 0 208 0s208 93.1 208 208c0 48.3-16.4 92.7-44 128h16.3c6.4 0 12.5 2.5 17 7l99.7 99.7c9.3 9.4 9.3 24.6 0 34zM344 208c0-75.2-60.8-136-136-136S72 132.8 72 208s60.8 136 136 136 136-60.8 136-136z"/></svg><svg style="position:absolute;left:405px;top:44.5px" width="24" height="24" viewBox="0 0 512 512"><path fill="#037ae0" d="M352.201 425.775l-79.196 79.196c-9.373 9.373-24.568 9.373-33.941 0l-79.196-79.196c-15.119-15.119-4.411-40.971 16.971-40.970h51.162L228 284H127.196v51.162c0 21.382-25.851 32.090-40.971 16.971L7.029 272.937c-9.373-9.373-9.373-24.569 0-33.941L86.225 159.800c15.119-15.119 40.971-4.411 40.971 16.971V228H228V127.196h-51.230c-21.382 0-32.090-25.851-16.971-40.971l79.196-79.196c9.373-9.373 24.568-9.373 33.941 0l79.196 79.196c15.119 15.119 4.411 40.971-16.971 40.971h-51.162V228h100.804v-51.162c0-21.382 25.851-32.090 40.970-16.971l79.196 79.196c9.373 9.373 9.373 24.569 0 33.941L425.773 352.200c-15.119 15.119-40.971 4.411-40.970-16.971V284H284v100.804h51.230c21.382 0 32.090 25.851 16.971 40.971z"/></svg><svg style="position:absolute;left:436.8px;top:44.5px" width="24" height="24" viewBox="0 0 512 512"><path fill="#037ae0" d="M304 192v32c0 6.6-5.4 12-12 12H124c-6.6 0-12-5.4-12-12v-32c0-6.6 5.4-12 12-12h168c6.6 0 12 5.4 12 12zm201 284.7L476.7 505c-9.4 9.4-24.6 9.4-33.9 0L343 405.3c-4.5-4.5-7-10.6-7-17V372c-35.3 27.6-79.7 44-128 44C93.1 416 0 322.9 0 208S93.1 0 208 0s208 93.1 208 208c0 48.3-16.4 92.7-44 128h16.3c6.4 0 12.5 2.5 17 7l99.7 99.7c9.3 9.4 9.3 24.6 0 34zM344 208c0-75.2-60.8-136-136-136S72 132.8 72 208s60.8 136 136 136 136-60.8 136-136z"/></svg><svg style="position:absolute;left:481.1px;top:44.1px" width="21" height="24" viewBox="0 0 448 512"><path fill="#037ae0" d="M32 464a48 48 0 0 0 48 48h288a48 48 0 0 0 48-48V128H32zm272-256a16 16 0 0 1 32 0v224a16 16 0 0 1-32 0zm-96 0a16 16 0 0 1 32 0v224a16 16 0 0 1-32 0zm-96 0a16 16 0 0 1 32 0v224a16 16 0 0 1-32 0zM432 32H312l-9.4-18.7A24 24 0 0 0 281.1 0H166.8a23.72 23.72 0 0 0-21.4 13.3L136 32H16A16 16 0 0 0 0 48v32a16 16 0 0 0 16 16h416a16 16 0 0 0 16-16V48a16 16 0 0 0-16-16z"/></svg><svg style="position:absolute;left:513.6px;top:44.1px" width="21" height="24" viewBox="0 0 448 512"><path fill="#037ae0" d="M433.941 129.941l-83.882-83.882A48 48 0 0 0 316.118 32H48C21.490 32 0 53.490 0 80v352c0 26.510 21.490 48 48 48h352c26.510 0 48-21.490 48-48V163.882a48 48 0 0 0-14.059-33.941zM224 416c-35.346 0-64-28.654-64-64 0-35.346 28.654-64 64-64s64 28.654 64 64c0 35.346-28.654 64-64 64zm96-304.520V212c0 6.627-5.373 12-12 12H76c-6.627 0-12-5.373-12-12V108c0-6.627 5.373-12 12-12h228.520c3.183 0 6.235 1.264 8.485 3.515l3.480 3.480A11.996 11.996 0 0 1 320 111.480z"/></svg><svg style="position:absolute;left:543.8px;top:44.5px" width="24" height="24" viewBox="0 0 512 512"><path fill="#037ae0" d="M256 8C119.043 8 8 119.083 8 256c0 136.997 111.043 248 248 248s248-111.003 248-248C504 119.083 392.957 8 256 8zm0 110c23.196 0 42 18.804 42 42s-18.804 42-42 42-42-18.804-42-42 18.804-42 42-42zm56 254c0 6.627-5.373 12-12 12h-88c-6.627 0-12-5.373-12-12v-24c0-6.627 5.373-12 12-12h12v-64h-12c-6.627 0-12-5.373-12-12v-24c0-6.627 5.373-12 12-12h64c6.627 0 12 5.373 12 12v100h12c6.627 0 12 5.373 12 12v24z"/></svg><svg style="position:absolute;left:839px;top:44.6px" width="24" height="24" viewBox="0 0 512 512"><path fill="#037ae0" d="M504 256c0 136.997-111.043 248-248 248S8 392.997 8 256C8 119.083 119.043 8 256 8s248 111.083 248 248zM262.655 90c-54.497 0-89.255 22.957-116.549 63.758-3.536 5.286-2.353 12.415 2.715 16.258l34.699 26.310c5.205 3.947 12.621 3.008 16.665-2.122 17.864-22.658 30.113-35.797 57.303-35.797 20.429 0 45.698 13.148 45.698 32.958 0 14.976-12.363 22.667-32.534 33.976C247.128 238.528 216 254.941 216 296v4c0 6.627 5.373 12 12 12h56c6.627 0 12-5.373 12-12v-1.333c0-28.462 83.186-29.647 83.186-106.667 0-58.002-60.165-102-116.531-102zM256 338c-25.365 0-46 20.635-46 46 0 25.364 20.635 46 46 46s46-20.636 46-46c0-25.365-20.635-46-46-46z"/></svg><div style="position:absolute;left:210px;top:84px;width:599px;height:481px;background:#fffbd0"></div><div class="t" style="left:216.00px;top:89.55px;font-size:9.15px;line-height:9.15px;color:#222;font-weight:400;transform:scaleY(1.12);transform-origin:0 7.75px;">Statistisches Landesamt Baden-Württemberg</div><div class="t" style="left:216.00px;top:101.55px;font-size:9.15px;line-height:9.15px;color:#222;font-weight:400;transform:scaleY(1.12);transform-origin:0 7.75px;">Schulbogen 2 für Realschulen</div><svg style="position:absolute;left:746px;top:88.4px;filter:blur(0.45px)" width="47.0" height="10.0" shape-rendering="crispEdges"><rect x="0.00" y="0.00" width="3.66" height="3.63" fill="rgb(208,204,174)"/><rect x="3.36" y="0.00" width="3.66" height="3.63" fill="rgb(218,216,185)"/><rect x="6.71" y="0.00" width="3.66" height="3.63" fill="rgb(225,224,192)"/><rect x="13.43" y="0.00" width="3.66" height="3.63" fill="rgb(233,230,192)"/><rect x="16.79" y="0.00" width="3.66" height="3.63" fill="rgb(165,170,157)"/><rect x="23.50" y="0.00" width="3.66" height="3.63" fill="rgb(185,183,167)"/><rect x="26.86" y="0.00" width="3.66" height="3.63" fill="rgb(204,199,175)"/><rect x="30.21" y="0.00" width="3.66" height="3.63" fill="rgb(235,230,194)"/><rect x="33.57" y="0.00" width="3.66" height="3.63" fill="rgb(181,173,155)"/><rect x="36.93" y="0.00" width="3.66" height="3.63" fill="rgb(195,192,173)"/><rect x="40.29" y="0.00" width="3.66" height="3.63" fill="rgb(229,225,189)"/><rect x="43.64" y="0.00" width="3.66" height="3.63" fill="rgb(181,186,169)"/><rect x="0.00" y="3.33" width="3.66" height="3.63" fill="rgb(192,193,170)"/><rect x="3.36" y="3.33" width="3.66" height="3.63" fill="rgb(156,165,159)"/><rect x="6.71" y="3.33" width="3.66" height="3.63" fill="rgb(183,172,167)"/><rect x="13.43" y="3.33" width="3.66" height="3.63" fill="rgb(202,199,169)"/><rect x="16.79" y="3.33" width="3.66" height="3.63" fill="rgb(181,166,156)"/><rect x="23.50" y="3.33" width="3.66" height="3.63" fill="rgb(173,180,157)"/><rect x="26.86" y="3.33" width="3.66" height="3.63" fill="rgb(167,170,163)"/><rect x="30.21" y="3.33" width="3.66" height="3.63" fill="rgb(218,216,185)"/><rect x="33.57" y="3.33" width="3.66" height="3.63" fill="rgb(232,228,196)"/><rect x="36.93" y="3.33" width="3.66" height="3.63" fill="rgb(188,176,167)"/><rect x="40.29" y="3.33" width="3.66" height="3.63" fill="rgb(227,224,190)"/><rect x="43.64" y="3.33" width="3.66" height="3.63" fill="rgb(169,167,160)"/><rect x="0.00" y="6.67" width="3.66" height="3.63" fill="rgb(245,240,201)"/><rect x="3.36" y="6.67" width="3.66" height="3.63" fill="rgb(221,222,188)"/><rect x="6.71" y="6.67" width="3.66" height="3.63" fill="rgb(237,232,195)"/><rect x="13.43" y="6.67" width="3.66" height="3.63" fill="rgb(222,222,187)"/><rect x="16.79" y="6.67" width="3.66" height="3.63" fill="rgb(230,224,191)"/><rect x="23.50" y="6.67" width="3.66" height="3.63" fill="rgb(236,232,196)"/><rect x="26.86" y="6.67" width="3.66" height="3.63" fill="rgb(228,224,193)"/><rect x="30.21" y="6.67" width="3.66" height="3.63" fill="rgb(242,239,199)"/><rect x="33.57" y="6.67" width="3.66" height="3.63" fill="rgb(247,243,203)"/><rect x="36.93" y="6.67" width="3.66" height="3.63" fill="rgb(240,237,198)"/><rect x="40.29" y="6.67" width="3.66" height="3.63" fill="rgb(228,222,193)"/><rect x="43.64" y="6.67" width="3.66" height="3.63" fill="rgb(239,235,199)"/></svg><div style="position:absolute;left:216px;top:112px;width:587px;height:49px;border:1px solid #3a3a33;box-sizing:border-box"></div><div style="position:absolute;left:302px;top:112px;width:1px;height:49px;background:#3a3a33"></div><div style="position:absolute;left:512px;top:112px;width:1px;height:49px;background:#3a3a33"></div><div style="position:absolute;left:744px;top:112px;width:1px;height:49px;background:#3a3a33"></div><div style="position:absolute;left:303px;top:113px;width:209px;height:47px;background:#e6e6e6"></div><div style="position:absolute;left:303px;top:127px;width:209px;height:1px;background:#ececec"></div><div style="position:absolute;left:303px;top:143px;width:209px;height:1px;background:#ececec"></div><div style="position:absolute;left:636px;top:113px;width:108px;height:30px;background:#e6e6e6"></div><div style="position:absolute;left:635px;top:113px;width:1px;height:30px;background:#3a3a33"></div><div style="position:absolute;left:636px;top:127px;width:108px;height:1px;background:#ececec"></div><div class="t" style="right:580.20px;top:115.60px;font-size:9.1px;line-height:9.1px;color:#222;font-weight:400;transform:scaleY(1.12);transform-origin:0 7.70px;">Name der Schule:</div><div class="t" style="right:580.20px;top:131.60px;font-size:9.1px;line-height:9.1px;color:#222;font-weight:400;transform:scaleY(1.12);transform-origin:0 7.70px;">Adresse:</div><div class="t" style="right:580.20px;top:147.60px;font-size:9.1px;line-height:9.1px;color:#222;font-weight:400;transform:scaleY(1.12);transform-origin:0 7.70px;">PLZ/Ort:</div><div class="t" style="right:246.60px;top:115.60px;font-size:9.1px;line-height:9.1px;color:#222;font-weight:400;transform:scaleY(1.12);transform-origin:0 7.70px;">Dienststellennummer:</div><div class="t" style="right:246.60px;top:131.60px;font-size:9.1px;line-height:9.1px;color:#222;font-weight:400;transform:scaleY(1.12);transform-origin:0 7.70px;">lfdNr Außenstelle:</div><svg style="position:absolute;left:303.5px;top:114px;filter:blur(0.45px)" width="208.0" height="11.0" shape-rendering="crispEdges"><rect x="0.00" y="0.00" width="3.60" height="3.97" fill="rgb(162,155,160)"/><rect x="3.30" y="0.00" width="3.60" height="3.97" fill="rgb(214,213,214)"/><rect x="6.60" y="0.00" width="3.60" height="3.97" fill="rgb(171,176,180)"/><rect x="9.90" y="0.00" width="3.60" height="3.97" fill="rgb(201,194,201)"/><rect x="13.21" y="0.00" width="3.60" height="3.97" fill="rgb(185,183,194)"/><rect x="19.81" y="0.00" width="3.60" height="3.97" fill="rgb(213,214,213)"/><rect x="23.11" y="0.00" width="3.60" height="3.97" fill="rgb(202,201,204)"/><rect x="26.41" y="0.00" width="3.60" height="3.97" fill="rgb(156,157,164)"/><rect x="29.71" y="0.00" width="3.60" height="3.97" fill="rgb(212,212,213)"/><rect x="33.02" y="0.00" width="3.60" height="3.97" fill="rgb(215,214,215)"/><rect x="36.32" y="0.00" width="3.60" height="3.97" fill="rgb(165,161,166)"/><rect x="39.62" y="0.00" width="3.60" height="3.97" fill="rgb(196,197,203)"/><rect x="42.92" y="0.00" width="3.60" height="3.97" fill="rgb(173,171,171)"/><rect x="46.22" y="0.00" width="3.60" height="3.97" fill="rgb(177,180,183)"/><rect x="49.52" y="0.00" width="3.60" height="3.97" fill="rgb(198,199,198)"/><rect x="52.83" y="0.00" width="3.60" height="3.97" fill="rgb(149,152,159)"/><rect x="56.13" y="0.00" width="3.60" height="3.97" fill="rgb(172,168,169)"/><rect x="59.43" y="0.00" width="3.60" height="3.97" fill="rgb(154,151,170)"/><rect x="62.73" y="0.00" width="3.60" height="3.97" fill="rgb(175,174,184)"/><rect x="66.03" y="0.00" width="3.60" height="3.97" fill="rgb(187,185,191)"/><rect x="69.33" y="0.00" width="3.60" height="3.97" fill="rgb(188,185,188)"/><rect x="72.63" y="0.00" width="3.60" height="3.97" fill="rgb(201,197,205)"/><rect x="75.94" y="0.00" width="3.60" height="3.97" fill="rgb(202,202,209)"/><rect x="79.24" y="0.00" width="3.60" height="3.97" fill="rgb(189,187,191)"/><rect x="85.84" y="0.00" width="3.60" height="3.97" fill="rgb(171,171,178)"/><rect x="89.14" y="0.00" width="3.60" height="3.97" fill="rgb(210,209,213)"/><rect x="92.44" y="0.00" width="3.60" height="3.97" fill="rgb(166,153,172)"/><rect x="95.75" y="0.00" width="3.60" height="3.97" fill="rgb(162,147,157)"/><rect x="99.05" y="0.00" width="3.60" height="3.97" fill="rgb(204,208,210)"/><rect x="102.35" y="0.00" width="3.60" height="3.97" fill="rgb(177,173,175)"/><rect x="105.65" y="0.00" width="3.60" height="3.97" fill="rgb(205,208,208)"/><rect x="108.95" y="0.00" width="3.60" height="3.97" fill="rgb(193,189,195)"/><rect x="115.56" y="0.00" width="3.60" height="3.97" fill="rgb(197,194,197)"/><rect x="118.86" y="0.00" width="3.60" height="3.97" fill="rgb(151,156,160)"/><rect x="122.16" y="0.00" width="3.60" height="3.97" fill="rgb(212,211,215)"/><rect x="125.46" y="0.00" width="3.60" height="3.97" fill="rgb(193,191,193)"/><rect x="128.76" y="0.00" width="3.60" height="3.97" fill="rgb(152,162,159)"/><rect x="132.06" y="0.00" width="3.60" height="3.97" fill="rgb(213,214,217)"/><rect x="135.37" y="0.00" width="3.60" height="3.97" fill="rgb(214,213,216)"/><rect x="138.67" y="0.00" width="3.60" height="3.97" fill="rgb(202,201,206)"/><rect x="141.97" y="0.00" width="3.60" height="3.97" fill="rgb(200,195,198)"/><rect x="145.27" y="0.00" width="3.60" height="3.97" fill="rgb(168,162,176)"/><rect x="148.57" y="0.00" width="3.60" height="3.97" fill="rgb(210,209,212)"/><rect x="151.87" y="0.00" width="3.60" height="3.97" fill="rgb(171,171,177)"/><rect x="155.17" y="0.00" width="3.60" height="3.97" fill="rgb(149,161,155)"/><rect x="158.48" y="0.00" width="3.60" height="3.97" fill="rgb(199,203,203)"/><rect x="161.78" y="0.00" width="3.60" height="3.97" fill="rgb(193,186,193)"/><rect x="165.08" y="0.00" width="3.60" height="3.97" fill="rgb(182,181,186)"/><rect x="168.38" y="0.00" width="3.60" height="3.97" fill="rgb(190,188,198)"/><rect x="171.68" y="0.00" width="3.60" height="3.97" fill="rgb(174,166,176)"/><rect x="174.98" y="0.00" width="3.60" height="3.97" fill="rgb(165,157,169)"/><rect x="178.29" y="0.00" width="3.60" height="3.97" fill="rgb(152,150,160)"/><rect x="181.59" y="0.00" width="3.60" height="3.97" fill="rgb(173,163,169)"/><rect x="184.89" y="0.00" width="3.60" height="3.97" fill="rgb(197,197,198)"/><rect x="188.19" y="0.00" width="3.60" height="3.97" fill="rgb(190,196,198)"/><rect x="191.49" y="0.00" width="3.60" height="3.97" fill="rgb(209,205,209)"/><rect x="198.10" y="0.00" width="3.60" height="3.97" fill="rgb(155,153,156)"/><rect x="201.40" y="0.00" width="3.60" height="3.97" fill="rgb(202,198,202)"/><rect x="204.70" y="0.00" width="3.60" height="3.97" fill="rgb(185,187,195)"/><rect x="0.00" y="3.67" width="3.60" height="3.97" fill="rgb(169,170,174)"/><rect x="3.30" y="3.67" width="3.60" height="3.97" fill="rgb(205,204,208)"/><rect x="6.60" y="3.67" width="3.60" height="3.97" fill="rgb(154,155,166)"/><rect x="9.90" y="3.67" width="3.60" height="3.97" fill="rgb(184,188,194)"/><rect x="13.21" y="3.67" width="3.60" height="3.97" fill="rgb(166,168,172)"/><rect x="19.81" y="3.67" width="3.60" height="3.97" fill="rgb(172,169,179)"/><rect x="23.11" y="3.67" width="3.60" height="3.97" fill="rgb(207,209,211)"/><rect x="26.41" y="3.67" width="3.60" height="3.97" fill="rgb(170,171,178)"/><rect x="29.71" y="3.67" width="3.60" height="3.97" fill="rgb(172,175,184)"/><rect x="33.02" y="3.67" width="3.60" height="3.97" fill="rgb(203,203,204)"/><rect x="36.32" y="3.67" width="3.60" height="3.97" fill="rgb(187,177,187)"/><rect x="39.62" y="3.67" width="3.60" height="3.97" fill="rgb(205,206,206)"/><rect x="42.92" y="3.67" width="3.60" height="3.97" fill="rgb(208,207,210)"/><rect x="46.22" y="3.67" width="3.60" height="3.97" fill="rgb(182,183,185)"/><rect x="49.52" y="3.67" width="3.60" height="3.97" fill="rgb(191,184,193)"/><rect x="52.83" y="3.67" width="3.60" height="3.97" fill="rgb(191,184,196)"/><rect x="56.13" y="3.67" width="3.60" height="3.97" fill="rgb(187,188,194)"/><rect x="59.43" y="3.67" width="3.60" height="3.97" fill="rgb(213,212,215)"/><rect x="62.73" y="3.67" width="3.60" height="3.97" fill="rgb(189,188,197)"/><rect x="66.03" y="3.67" width="3.60" height="3.97" fill="rgb(153,147,165)"/><rect x="69.33" y="3.67" width="3.60" height="3.97" fill="rgb(186,185,195)"/><rect x="72.63" y="3.67" width="3.60" height="3.97" fill="rgb(163,160,168)"/><rect x="75.94" y="3.67" width="3.60" height="3.97" fill="rgb(202,198,203)"/><rect x="79.24" y="3.67" width="3.60" height="3.97" fill="rgb(165,159,164)"/><rect x="85.84" y="3.67" width="3.60" height="3.97" fill="rgb(174,181,181)"/><rect x="89.14" y="3.67" width="3.60" height="3.97" fill="rgb(155,156,161)"/><rect x="92.44" y="3.67" width="3.60" height="3.97" fill="rgb(183,181,192)"/><rect x="95.75" y="3.67" width="3.60" height="3.97" fill="rgb(194,194,199)"/><rect x="99.05" y="3.67" width="3.60" height="3.97" fill="rgb(187,187,189)"/><rect x="102.35" y="3.67" width="3.60" height="3.97" fill="rgb(159,145,166)"/><rect x="105.65" y="3.67" width="3.60" height="3.97" fill="rgb(160,148,167)"/><rect x="108.95" y="3.67" width="3.60" height="3.97" fill="rgb(167,166,184)"/><rect x="115.56" y="3.67" width="3.60" height="3.97" fill="rgb(168,165,172)"/><rect x="118.86" y="3.67" width="3.60" height="3.97" fill="rgb(201,197,199)"/><rect x="122.16" y="3.67" width="3.60" height="3.97" fill="rgb(160,149,168)"/><rect x="125.46" y="3.67" width="3.60" height="3.97" fill="rgb(178,176,184)"/><rect x="128.76" y="3.67" width="3.60" height="3.97" fill="rgb(168,157,172)"/><rect x="132.06" y="3.67" width="3.60" height="3.97" fill="rgb(182,178,188)"/><rect x="135.37" y="3.67" width="3.60" height="3.97" fill="rgb(175,174,179)"/><rect x="138.67" y="3.67" width="3.60" height="3.97" fill="rgb(177,181,183)"/><rect x="141.97" y="3.67" width="3.60" height="3.97" fill="rgb(182,182,190)"/><rect x="145.27" y="3.67" width="3.60" height="3.97" fill="rgb(215,213,215)"/><rect x="148.57" y="3.67" width="3.60" height="3.97" fill="rgb(175,168,175)"/><rect x="151.87" y="3.67" width="3.60" height="3.97" fill="rgb(144,153,161)"/><rect x="155.17" y="3.67" width="3.60" height="3.97" fill="rgb(212,212,215)"/><rect x="158.48" y="3.67" width="3.60" height="3.97" fill="rgb(196,192,196)"/><rect x="161.78" y="3.67" width="3.60" height="3.97" fill="rgb(148,158,164)"/><rect x="165.08" y="3.67" width="3.60" height="3.97" fill="rgb(195,190,195)"/><rect x="168.38" y="3.67" width="3.60" height="3.97" fill="rgb(183,176,184)"/><rect x="171.68" y="3.67" width="3.60" height="3.97" fill="rgb(187,189,188)"/><rect x="174.98" y="3.67" width="3.60" height="3.97" fill="rgb(159,159,163)"/><rect x="178.29" y="3.67" width="3.60" height="3.97" fill="rgb(186,182,189)"/><rect x="181.59" y="3.67" width="3.60" height="3.97" fill="rgb(191,190,197)"/><rect x="184.89" y="3.67" width="3.60" height="3.97" fill="rgb(176,166,181)"/><rect x="188.19" y="3.67" width="3.60" height="3.97" fill="rgb(157,148,160)"/><rect x="191.49" y="3.67" width="3.60" height="3.97" fill="rgb(212,215,215)"/><rect x="198.10" y="3.67" width="3.60" height="3.97" fill="rgb(175,175,178)"/><rect x="201.40" y="3.67" width="3.60" height="3.97" fill="rgb(175,175,180)"/><rect x="204.70" y="3.67" width="3.60" height="3.97" fill="rgb(166,171,175)"/><rect x="0.00" y="7.33" width="3.60" height="3.97" fill="rgb(201,201,203)"/><rect x="3.30" y="7.33" width="3.60" height="3.97" fill="rgb(205,204,205)"/><rect x="6.60" y="7.33" width="3.60" height="3.97" fill="rgb(204,202,203)"/><rect x="9.90" y="7.33" width="3.60" height="3.97" fill="rgb(215,215,216)"/><rect x="13.21" y="7.33" width="3.60" height="3.97" fill="rgb(209,204,209)"/><rect x="19.81" y="7.33" width="3.60" height="3.97" fill="rgb(222,223,223)"/><rect x="23.11" y="7.33" width="3.60" height="3.97" fill="rgb(199,196,201)"/><rect x="26.41" y="7.33" width="3.60" height="3.97" fill="rgb(210,210,210)"/><rect x="29.71" y="7.33" width="3.60" height="3.97" fill="rgb(211,213,213)"/><rect x="33.02" y="7.33" width="3.60" height="3.97" fill="rgb(218,218,221)"/><rect x="36.32" y="7.33" width="3.60" height="3.97" fill="rgb(221,219,222)"/><rect x="39.62" y="7.33" width="3.60" height="3.97" fill="rgb(219,220,220)"/><rect x="42.92" y="7.33" width="3.60" height="3.97" fill="rgb(202,201,208)"/><rect x="46.22" y="7.33" width="3.60" height="3.97" fill="rgb(207,206,205)"/><rect x="49.52" y="7.33" width="3.60" height="3.97" fill="rgb(208,206,211)"/><rect x="52.83" y="7.33" width="3.60" height="3.97" fill="rgb(218,217,216)"/><rect x="56.13" y="7.33" width="3.60" height="3.97" fill="rgb(223,223,223)"/><rect x="59.43" y="7.33" width="3.60" height="3.97" fill="rgb(216,214,218)"/><rect x="62.73" y="7.33" width="3.60" height="3.97" fill="rgb(209,210,213)"/><rect x="66.03" y="7.33" width="3.60" height="3.97" fill="rgb(213,210,215)"/><rect x="69.33" y="7.33" width="3.60" height="3.97" fill="rgb(214,214,215)"/><rect x="72.63" y="7.33" width="3.60" height="3.97" fill="rgb(214,215,216)"/><rect x="75.94" y="7.33" width="3.60" height="3.97" fill="rgb(208,206,213)"/><rect x="79.24" y="7.33" width="3.60" height="3.97" fill="rgb(207,204,208)"/><rect x="85.84" y="7.33" width="3.60" height="3.97" fill="rgb(200,198,199)"/><rect x="89.14" y="7.33" width="3.60" height="3.97" fill="rgb(214,211,214)"/><rect x="92.44" y="7.33" width="3.60" height="3.97" fill="rgb(209,209,209)"/><rect x="95.75" y="7.33" width="3.60" height="3.97" fill="rgb(223,223,224)"/><rect x="99.05" y="7.33" width="3.60" height="3.97" fill="rgb(204,199,207)"/><rect x="102.35" y="7.33" width="3.60" height="3.97" fill="rgb(204,202,203)"/><rect x="105.65" y="7.33" width="3.60" height="3.97" fill="rgb(203,202,206)"/><rect x="108.95" y="7.33" width="3.60" height="3.97" fill="rgb(213,214,217)"/><rect x="115.56" y="7.33" width="3.60" height="3.97" fill="rgb(219,219,218)"/><rect x="118.86" y="7.33" width="3.60" height="3.97" fill="rgb(208,207,208)"/><rect x="122.16" y="7.33" width="3.60" height="3.97" fill="rgb(217,217,218)"/><rect x="125.46" y="7.33" width="3.60" height="3.97" fill="rgb(222,221,221)"/><rect x="128.76" y="7.33" width="3.60" height="3.97" fill="rgb(210,210,210)"/><rect x="132.06" y="7.33" width="3.60" height="3.97" fill="rgb(211,209,211)"/><rect x="135.37" y="7.33" width="3.60" height="3.97" fill="rgb(219,218,220)"/><rect x="138.67" y="7.33" width="3.60" height="3.97" fill="rgb(213,211,213)"/><rect x="141.97" y="7.33" width="3.60" height="3.97" fill="rgb(196,194,201)"/><rect x="145.27" y="7.33" width="3.60" height="3.97" fill="rgb(201,203,204)"/><rect x="148.57" y="7.33" width="3.60" height="3.97" fill="rgb(208,207,214)"/><rect x="151.87" y="7.33" width="3.60" height="3.97" fill="rgb(201,201,202)"/><rect x="155.17" y="7.33" width="3.60" height="3.97" fill="rgb(203,205,207)"/><rect x="158.48" y="7.33" width="3.60" height="3.97" fill="rgb(205,200,202)"/><rect x="161.78" y="7.33" width="3.60" height="3.97" fill="rgb(217,217,218)"/><rect x="165.08" y="7.33" width="3.60" height="3.97" fill="rgb(210,208,213)"/><rect x="168.38" y="7.33" width="3.60" height="3.97" fill="rgb(197,200,202)"/><rect x="171.68" y="7.33" width="3.60" height="3.97" fill="rgb(221,220,221)"/><rect x="174.98" y="7.33" width="3.60" height="3.97" fill="rgb(209,207,208)"/><rect x="178.29" y="7.33" width="3.60" height="3.97" fill="rgb(210,213,215)"/><rect x="181.59" y="7.33" width="3.60" height="3.97" fill="rgb(216,217,218)"/><rect x="184.89" y="7.33" width="3.60" height="3.97" fill="rgb(202,201,200)"/><rect x="188.19" y="7.33" width="3.60" height="3.97" fill="rgb(204,203,208)"/><rect x="191.49" y="7.33" width="3.60" height="3.97" fill="rgb(221,222,223)"/><rect x="198.10" y="7.33" width="3.60" height="3.97" fill="rgb(205,206,209)"/><rect x="201.40" y="7.33" width="3.60" height="3.97" fill="rgb(220,220,221)"/><rect x="204.70" y="7.33" width="3.60" height="3.97" fill="rgb(209,209,211)"/></svg><svg style="position:absolute;left:303.5px;top:131.8px;filter:blur(0.45px)" width="52.5" height="10.2" shape-rendering="crispEdges"><rect x="0.00" y="0.00" width="3.58" height="3.70" fill="rgb(164,172,171)"/><rect x="3.28" y="0.00" width="3.58" height="3.70" fill="rgb(213,210,215)"/><rect x="6.56" y="0.00" width="3.58" height="3.70" fill="rgb(164,151,163)"/><rect x="9.84" y="0.00" width="3.58" height="3.70" fill="rgb(210,209,210)"/><rect x="13.12" y="0.00" width="3.58" height="3.70" fill="rgb(183,187,188)"/><rect x="16.41" y="0.00" width="3.58" height="3.70" fill="rgb(169,169,173)"/><rect x="19.69" y="0.00" width="3.58" height="3.70" fill="rgb(168,162,178)"/><rect x="22.97" y="0.00" width="3.58" height="3.70" fill="rgb(196,194,198)"/><rect x="26.25" y="0.00" width="3.58" height="3.70" fill="rgb(157,153,166)"/><rect x="29.53" y="0.00" width="3.58" height="3.70" fill="rgb(196,190,200)"/><rect x="32.81" y="0.00" width="3.58" height="3.70" fill="rgb(212,211,211)"/><rect x="39.38" y="0.00" width="3.58" height="3.70" fill="rgb(181,180,184)"/><rect x="42.66" y="0.00" width="3.58" height="3.70" fill="rgb(194,194,197)"/><rect x="45.94" y="0.00" width="3.58" height="3.70" fill="rgb(207,209,207)"/><rect x="49.22" y="0.00" width="3.58" height="3.70" fill="rgb(164,172,166)"/><rect x="0.00" y="3.40" width="3.58" height="3.70" fill="rgb(159,155,160)"/><rect x="3.28" y="3.40" width="3.58" height="3.70" fill="rgb(160,154,165)"/><rect x="6.56" y="3.40" width="3.58" height="3.70" fill="rgb(150,155,156)"/><rect x="9.84" y="3.40" width="3.58" height="3.70" fill="rgb(204,203,203)"/><rect x="13.12" y="3.40" width="3.58" height="3.70" fill="rgb(207,209,211)"/><rect x="16.41" y="3.40" width="3.58" height="3.70" fill="rgb(194,196,201)"/><rect x="19.69" y="3.40" width="3.58" height="3.70" fill="rgb(162,156,161)"/><rect x="22.97" y="3.40" width="3.58" height="3.70" fill="rgb(165,168,166)"/><rect x="26.25" y="3.40" width="3.58" height="3.70" fill="rgb(159,165,173)"/><rect x="29.53" y="3.40" width="3.58" height="3.70" fill="rgb(177,185,186)"/><rect x="32.81" y="3.40" width="3.58" height="3.70" fill="rgb(154,151,169)"/><rect x="39.38" y="3.40" width="3.58" height="3.70" fill="rgb(187,188,194)"/><rect x="42.66" y="3.40" width="3.58" height="3.70" fill="rgb(214,213,215)"/><rect x="45.94" y="3.40" width="3.58" height="3.70" fill="rgb(207,207,210)"/><rect x="49.22" y="3.40" width="3.58" height="3.70" fill="rgb(195,192,198)"/><rect x="0.00" y="6.80" width="3.58" height="3.70" fill="rgb(222,222,222)"/><rect x="3.28" y="6.80" width="3.58" height="3.70" fill="rgb(210,210,210)"/><rect x="6.56" y="6.80" width="3.58" height="3.70" fill="rgb(196,195,198)"/><rect x="9.84" y="6.80" width="3.58" height="3.70" fill="rgb(218,215,217)"/><rect x="13.12" y="6.80" width="3.58" height="3.70" fill="rgb(203,202,208)"/><rect x="16.41" y="6.80" width="3.58" height="3.70" fill="rgb(208,209,208)"/><rect x="19.69" y="6.80" width="3.58" height="3.70" fill="rgb(202,197,201)"/><rect x="22.97" y="6.80" width="3.58" height="3.70" fill="rgb(210,209,211)"/><rect x="26.25" y="6.80" width="3.58" height="3.70" fill="rgb(211,213,216)"/><rect x="29.53" y="6.80" width="3.58" height="3.70" fill="rgb(220,220,220)"/><rect x="32.81" y="6.80" width="3.58" height="3.70" fill="rgb(204,201,204)"/><rect x="39.38" y="6.80" width="3.58" height="3.70" fill="rgb(202,200,207)"/><rect x="42.66" y="6.80" width="3.58" height="3.70" fill="rgb(202,201,205)"/><rect x="45.94" y="6.80" width="3.58" height="3.70" fill="rgb(214,213,215)"/><rect x="49.22" y="6.80" width="3.58" height="3.70" fill="rgb(204,199,205)"/></svg><svg style="position:absolute;left:303.5px;top:145.5px;filter:blur(0.45px)" width="63.5" height="11.0" shape-rendering="crispEdges"><rect x="0.00" y="0.00" width="3.64" height="3.97" fill="rgb(159,146,158)"/><rect x="3.34" y="0.00" width="3.64" height="3.97" fill="rgb(171,172,173)"/><rect x="6.68" y="0.00" width="3.64" height="3.97" fill="rgb(186,181,186)"/><rect x="10.03" y="0.00" width="3.64" height="3.97" fill="rgb(156,157,160)"/><rect x="13.37" y="0.00" width="3.64" height="3.97" fill="rgb(167,166,161)"/><rect x="16.71" y="0.00" width="3.64" height="3.97" fill="rgb(169,174,175)"/><rect x="20.05" y="0.00" width="3.64" height="3.97" fill="rgb(183,179,181)"/><rect x="23.39" y="0.00" width="3.64" height="3.97" fill="rgb(179,184,182)"/><rect x="26.74" y="0.00" width="3.64" height="3.97" fill="rgb(195,191,198)"/><rect x="33.42" y="0.00" width="3.64" height="3.97" fill="rgb(152,147,158)"/><rect x="36.76" y="0.00" width="3.64" height="3.97" fill="rgb(175,174,180)"/><rect x="40.11" y="0.00" width="3.64" height="3.97" fill="rgb(194,193,196)"/><rect x="43.45" y="0.00" width="3.64" height="3.97" fill="rgb(208,209,211)"/><rect x="46.79" y="0.00" width="3.64" height="3.97" fill="rgb(179,173,184)"/><rect x="50.13" y="0.00" width="3.64" height="3.97" fill="rgb(184,184,188)"/><rect x="53.47" y="0.00" width="3.64" height="3.97" fill="rgb(192,191,197)"/><rect x="56.82" y="0.00" width="3.64" height="3.97" fill="rgb(190,184,191)"/><rect x="60.16" y="0.00" width="3.64" height="3.97" fill="rgb(154,158,164)"/><rect x="0.00" y="3.67" width="3.64" height="3.97" fill="rgb(199,193,201)"/><rect x="3.34" y="3.67" width="3.64" height="3.97" fill="rgb(201,205,206)"/><rect x="6.68" y="3.67" width="3.64" height="3.97" fill="rgb(209,209,213)"/><rect x="10.03" y="3.67" width="3.64" height="3.97" fill="rgb(205,209,210)"/><rect x="13.37" y="3.67" width="3.64" height="3.97" fill="rgb(203,203,207)"/><rect x="16.71" y="3.67" width="3.64" height="3.97" fill="rgb(178,177,179)"/><rect x="20.05" y="3.67" width="3.64" height="3.97" fill="rgb(169,168,171)"/><rect x="23.39" y="3.67" width="3.64" height="3.97" fill="rgb(166,168,164)"/><rect x="26.74" y="3.67" width="3.64" height="3.97" fill="rgb(150,160,165)"/><rect x="33.42" y="3.67" width="3.64" height="3.97" fill="rgb(186,182,185)"/><rect x="36.76" y="3.67" width="3.64" height="3.97" fill="rgb(168,163,167)"/><rect x="40.11" y="3.67" width="3.64" height="3.97" fill="rgb(184,186,187)"/><rect x="43.45" y="3.67" width="3.64" height="3.97" fill="rgb(189,187,191)"/><rect x="46.79" y="3.67" width="3.64" height="3.97" fill="rgb(168,162,168)"/><rect x="50.13" y="3.67" width="3.64" height="3.97" fill="rgb(201,199,205)"/><rect x="53.47" y="3.67" width="3.64" height="3.97" fill="rgb(171,180,179)"/><rect x="56.82" y="3.67" width="3.64" height="3.97" fill="rgb(164,165,161)"/><rect x="60.16" y="3.67" width="3.64" height="3.97" fill="rgb(190,181,186)"/><rect x="0.00" y="7.33" width="3.64" height="3.97" fill="rgb(209,210,212)"/><rect x="3.34" y="7.33" width="3.64" height="3.97" fill="rgb(211,209,211)"/><rect x="6.68" y="7.33" width="3.64" height="3.97" fill="rgb(205,204,208)"/><rect x="10.03" y="7.33" width="3.64" height="3.97" fill="rgb(216,214,216)"/><rect x="13.37" y="7.33" width="3.64" height="3.97" fill="rgb(220,220,222)"/><rect x="16.71" y="7.33" width="3.64" height="3.97" fill="rgb(210,210,210)"/><rect x="20.05" y="7.33" width="3.64" height="3.97" fill="rgb(212,213,213)"/><rect x="23.39" y="7.33" width="3.64" height="3.97" fill="rgb(211,208,211)"/><rect x="26.74" y="7.33" width="3.64" height="3.97" fill="rgb(200,197,198)"/><rect x="33.42" y="7.33" width="3.64" height="3.97" fill="rgb(201,202,206)"/><rect x="36.76" y="7.33" width="3.64" height="3.97" fill="rgb(200,198,202)"/><rect x="40.11" y="7.33" width="3.64" height="3.97" fill="rgb(210,208,210)"/><rect x="43.45" y="7.33" width="3.64" height="3.97" fill="rgb(207,206,211)"/><rect x="46.79" y="7.33" width="3.64" height="3.97" fill="rgb(204,206,210)"/><rect x="50.13" y="7.33" width="3.64" height="3.97" fill="rgb(216,214,216)"/><rect x="53.47" y="7.33" width="3.64" height="3.97" fill="rgb(202,202,202)"/><rect x="56.82" y="7.33" width="3.64" height="3.97" fill="rgb(211,209,213)"/><rect x="60.16" y="7.33" width="3.64" height="3.97" fill="rgb(212,209,211)"/></svg><svg style="position:absolute;left:639.6px;top:115.2px;filter:blur(0.45px)" width="38.3" height="10.1" shape-rendering="crispEdges"><rect x="0.00" y="0.00" width="3.49" height="3.67" fill="rgb(204,207,206)"/><rect x="3.19" y="0.00" width="3.49" height="3.67" fill="rgb(206,207,211)"/><rect x="6.38" y="0.00" width="3.49" height="3.67" fill="rgb(178,168,173)"/><rect x="9.57" y="0.00" width="3.49" height="3.67" fill="rgb(161,166,168)"/><rect x="12.77" y="0.00" width="3.49" height="3.67" fill="rgb(202,200,208)"/><rect x="15.96" y="0.00" width="3.49" height="3.67" fill="rgb(174,175,180)"/><rect x="19.15" y="0.00" width="3.49" height="3.67" fill="rgb(212,210,214)"/><rect x="22.34" y="0.00" width="3.49" height="3.67" fill="rgb(186,182,185)"/><rect x="25.53" y="0.00" width="3.49" height="3.67" fill="rgb(159,149,167)"/><rect x="28.72" y="0.00" width="3.49" height="3.67" fill="rgb(158,161,174)"/><rect x="31.92" y="0.00" width="3.49" height="3.67" fill="rgb(186,178,185)"/><rect x="35.11" y="0.00" width="3.49" height="3.67" fill="rgb(163,164,178)"/><rect x="0.00" y="3.37" width="3.49" height="3.67" fill="rgb(185,179,183)"/><rect x="3.19" y="3.37" width="3.49" height="3.67" fill="rgb(188,194,192)"/><rect x="6.38" y="3.37" width="3.49" height="3.67" fill="rgb(173,177,181)"/><rect x="9.57" y="3.37" width="3.49" height="3.67" fill="rgb(184,184,194)"/><rect x="12.77" y="3.37" width="3.49" height="3.67" fill="rgb(189,188,193)"/><rect x="15.96" y="3.37" width="3.49" height="3.67" fill="rgb(195,199,200)"/><rect x="19.15" y="3.37" width="3.49" height="3.67" fill="rgb(205,201,205)"/><rect x="22.34" y="3.37" width="3.49" height="3.67" fill="rgb(154,158,171)"/><rect x="25.53" y="3.37" width="3.49" height="3.67" fill="rgb(157,158,171)"/><rect x="28.72" y="3.37" width="3.49" height="3.67" fill="rgb(193,186,197)"/><rect x="31.92" y="3.37" width="3.49" height="3.67" fill="rgb(178,180,182)"/><rect x="35.11" y="3.37" width="3.49" height="3.67" fill="rgb(165,172,175)"/><rect x="0.00" y="6.73" width="3.49" height="3.67" fill="rgb(213,214,214)"/><rect x="3.19" y="6.73" width="3.49" height="3.67" fill="rgb(198,200,204)"/><rect x="6.38" y="6.73" width="3.49" height="3.67" fill="rgb(217,216,218)"/><rect x="9.57" y="6.73" width="3.49" height="3.67" fill="rgb(208,208,209)"/><rect x="12.77" y="6.73" width="3.49" height="3.67" fill="rgb(219,218,220)"/><rect x="15.96" y="6.73" width="3.49" height="3.67" fill="rgb(221,220,221)"/><rect x="19.15" y="6.73" width="3.49" height="3.67" fill="rgb(214,215,216)"/><rect x="22.34" y="6.73" width="3.49" height="3.67" fill="rgb(220,219,221)"/><rect x="25.53" y="6.73" width="3.49" height="3.67" fill="rgb(201,202,205)"/><rect x="28.72" y="6.73" width="3.49" height="3.67" fill="rgb(219,219,221)"/><rect x="31.92" y="6.73" width="3.49" height="3.67" fill="rgb(205,205,209)"/><rect x="35.11" y="6.73" width="3.49" height="3.67" fill="rgb(204,207,207)"/></svg><svg style="position:absolute;left:639.6px;top:129.2px;filter:blur(0.45px)" width="10.2" height="10.2" shape-rendering="crispEdges"><rect x="0.00" y="0.00" width="3.70" height="3.70" fill="rgb(169,167,183)"/><rect x="3.40" y="0.00" width="3.70" height="3.70" fill="rgb(169,159,166)"/><rect x="6.80" y="0.00" width="3.70" height="3.70" fill="rgb(202,202,205)"/><rect x="0.00" y="3.40" width="3.70" height="3.70" fill="rgb(211,212,212)"/><rect x="3.40" y="3.40" width="3.70" height="3.70" fill="rgb(160,162,162)"/><rect x="6.80" y="3.40" width="3.70" height="3.70" fill="rgb(187,184,185)"/><rect x="0.00" y="6.80" width="3.70" height="3.70" fill="rgb(203,200,201)"/><rect x="3.40" y="6.80" width="3.70" height="3.70" fill="rgb(202,198,202)"/><rect x="6.80" y="6.80" width="3.70" height="3.70" fill="rgb(221,220,222)"/></svg><div class="t" style="left:572.70px;width:400px;text-align:center;top:111.29px;font-size:39px;line-height:39.0px;color:#000;font-weight:700;">2</div><div class="t" style="left:572.50px;width:400px;text-align:center;top:150.34px;font-size:9.4px;line-height:9.4px;color:#222;font-weight:700;transform:scaleY(1.12);transform-origin:0 7.96px;">Blatt 1</div><div class="t" style="left:216.00px;top:166.55px;font-size:9.15px;line-height:9.15px;color:#222;font-weight:400;transform:scaleY(1.12);transform-origin:0 7.75px;">Für die Stammschule (00) und jede Außenstelle (01, 02, 03) ist je ein Schulbogen 2 auszufüllen.</div><div class="t" style="left:216.00px;top:177.55px;font-size:9.15px;line-height:9.15px;color:#222;font-weight:400;transform:scaleY(1.12);transform-origin:0 7.75px;">Bitte die Erläuterungen in der Online-Hilfe beachten.</div><div style="position:absolute;left:216px;top:197.7px;width:31px;height:31px;border:2px solid #000;box-sizing:border-box;background:#fff"></div><div class="t" style="left:31.50px;width:400px;text-align:center;top:205.81px;font-size:18.3px;line-height:18.3px;color:#000;font-weight:700;">21</div><div class="t" style="left:255.50px;top:205.27px;font-size:11.85px;line-height:11.85px;color:#111;font-weight:700;">Einzugsbereich I, Schülerzahlen und Klassenaufbau</div><div style="position:absolute;left:215.8px;top:234.4px;width:117px;height:25px;box-sizing:border-box;border:1px solid #5a5a55;border-right:1.5px solid #4a4a45;border-bottom:1.5px solid #444440;border-radius:3px;background:#fffbd0"></div><div class="t" style="left:74.20px;width:400px;text-align:center;top:243.26px;font-size:9.5px;line-height:9.5px;color:#222;font-weight:400;transform:scaleY(1.12);transform-origin:0 8.04px;">TABELLE EDITIEREN</div><div style="position:absolute;left:449px;top:329px;width:40px;height:16px;background:#e7e7e7"></div><div class="t" style="left:269.00px;width:400px;text-align:center;top:333.84px;font-size:10px;line-height:10.0px;color:#222;font-weight:400;transform:scaleY(1.08);transform-origin:0 8.46px;-webkit-text-stroke:0.12px #222;">0</div><div style="position:absolute;left:490px;top:329px;width:40px;height:16px;background:#e7e7e7"></div><div class="t" style="left:310.00px;width:400px;text-align:center;top:333.84px;font-size:10px;line-height:10.0px;color:#222;font-weight:400;transform:scaleY(1.08);transform-origin:0 8.46px;-webkit-text-stroke:0.12px #222;">0</div><div style="position:absolute;left:531px;top:329px;width:40px;height:16px;background:#e7e7e7"></div><div class="t" style="left:351.00px;width:400px;text-align:center;top:333.84px;font-size:10px;line-height:10.0px;color:#222;font-weight:400;transform:scaleY(1.08);transform-origin:0 8.46px;-webkit-text-stroke:0.12px #222;">0</div><div style="position:absolute;left:572px;top:329px;width:39px;height:16px;background:#e7e7e7"></div><div class="t" style="left:391.50px;width:400px;text-align:center;top:333.84px;font-size:10px;line-height:10.0px;color:#222;font-weight:400;transform:scaleY(1.08);transform-origin:0 8.46px;-webkit-text-stroke:0.12px #222;">0</div><div style="position:absolute;left:612px;top:329px;width:40px;height:16px;background:#e7e7e7"></div><div class="t" style="left:432.00px;width:400px;text-align:center;top:333.84px;font-size:10px;line-height:10.0px;color:#222;font-weight:400;transform:scaleY(1.08);transform-origin:0 8.46px;-webkit-text-stroke:0.12px #222;">0</div><div style="position:absolute;left:653px;top:329px;width:40px;height:16px;background:#e7e7e7"></div><div class="t" style="left:473.00px;width:400px;text-align:center;top:333.84px;font-size:10px;line-height:10.0px;color:#222;font-weight:400;transform:scaleY(1.08);transform-origin:0 8.46px;-webkit-text-stroke:0.12px #222;">0</div><div style="position:absolute;left:694px;top:329px;width:39px;height:16px;background:#e7e7e7"></div><div class="t" style="left:513.50px;width:400px;text-align:center;top:333.84px;font-size:10px;line-height:10.0px;color:#222;font-weight:400;transform:scaleY(1.08);transform-origin:0 8.46px;-webkit-text-stroke:0.12px #222;">0</div><div style="position:absolute;left:734px;top:329px;width:69px;height:16px;background:#e7e7e7"></div><div class="t" style="left:568.50px;width:400px;text-align:center;top:333.84px;font-size:10px;line-height:10.0px;color:#222;font-weight:400;transform:scaleY(1.08);transform-origin:0 8.46px;-webkit-text-stroke:0.12px #222;">0</div><div style="position:absolute;left:449px;top:346px;width:40px;height:16px;background:#e7e7e7"></div><div class="t" style="left:269.00px;width:400px;text-align:center;top:349.84px;font-size:10px;line-height:10.0px;color:#222;font-weight:400;transform:scaleY(1.08);transform-origin:0 8.46px;-webkit-text-stroke:0.12px #222;">0</div><div style="position:absolute;left:490px;top:346px;width:40px;height:16px;background:#e7e7e7"></div><div class="t" style="left:310.00px;width:400px;text-align:center;top:349.84px;font-size:10px;line-height:10.0px;color:#222;font-weight:400;transform:scaleY(1.08);transform-origin:0 8.46px;-webkit-text-stroke:0.12px #222;">0</div><div style="position:absolute;left:531px;top:346px;width:40px;height:16px;background:#e7e7e7"></div><div class="t" style="left:351.00px;width:400px;text-align:center;top:349.84px;font-size:10px;line-height:10.0px;color:#222;font-weight:400;transform:scaleY(1.08);transform-origin:0 8.46px;-webkit-text-stroke:0.12px #222;">0</div><div style="position:absolute;left:572px;top:346px;width:39px;height:16px;background:#e7e7e7"></div><div class="t" style="left:391.50px;width:400px;text-align:center;top:349.84px;font-size:10px;line-height:10.0px;color:#222;font-weight:400;transform:scaleY(1.08);transform-origin:0 8.46px;-webkit-text-stroke:0.12px #222;">0</div><div style="position:absolute;left:612px;top:346px;width:40px;height:16px;background:#e7e7e7"></div><div class="t" style="left:432.00px;width:400px;text-align:center;top:349.84px;font-size:10px;line-height:10.0px;color:#222;font-weight:400;transform:scaleY(1.08);transform-origin:0 8.46px;-webkit-text-stroke:0.12px #222;">0</div><div style="position:absolute;left:653px;top:346px;width:40px;height:16px;background:#e7e7e7"></div><div class="t" style="left:473.00px;width:400px;text-align:center;top:349.84px;font-size:10px;line-height:10.0px;color:#222;font-weight:400;transform:scaleY(1.08);transform-origin:0 8.46px;-webkit-text-stroke:0.12px #222;">0</div><div style="position:absolute;left:694px;top:346px;width:39px;height:16px;background:#e7e7e7"></div><div class="t" style="left:513.50px;width:400px;text-align:center;top:349.84px;font-size:10px;line-height:10.0px;color:#222;font-weight:400;transform:scaleY(1.08);transform-origin:0 8.46px;-webkit-text-stroke:0.12px #222;">0</div><div style="position:absolute;left:734px;top:346px;width:69px;height:16px;background:#e7e7e7"></div><div class="t" style="left:568.50px;width:400px;text-align:center;top:349.84px;font-size:10px;line-height:10.0px;color:#222;font-weight:400;transform:scaleY(1.08);transform-origin:0 8.46px;-webkit-text-stroke:0.12px #222;">0</div><div style="position:absolute;left:449px;top:363px;width:40px;height:16px;background:#e7e7e7"></div><div class="t" style="left:269.00px;width:400px;text-align:center;top:366.84px;font-size:10px;line-height:10.0px;color:#222;font-weight:400;transform:scaleY(1.08);transform-origin:0 8.46px;-webkit-text-stroke:0.12px #222;">0</div><div style="position:absolute;left:490px;top:363px;width:40px;height:16px;background:#e7e7e7"></div><div class="t" style="left:310.00px;width:400px;text-align:center;top:366.84px;font-size:10px;line-height:10.0px;color:#222;font-weight:400;transform:scaleY(1.08);transform-origin:0 8.46px;-webkit-text-stroke:0.12px #222;">0</div><div style="position:absolute;left:531px;top:363px;width:40px;height:16px;background:#e7e7e7"></div><div class="t" style="left:351.00px;width:400px;text-align:center;top:366.84px;font-size:10px;line-height:10.0px;color:#222;font-weight:400;transform:scaleY(1.08);transform-origin:0 8.46px;-webkit-text-stroke:0.12px #222;">0</div><div style="position:absolute;left:572px;top:363px;width:39px;height:16px;background:#e7e7e7"></div><div class="t" style="left:391.50px;width:400px;text-align:center;top:366.84px;font-size:10px;line-height:10.0px;color:#222;font-weight:400;transform:scaleY(1.08);transform-origin:0 8.46px;-webkit-text-stroke:0.12px #222;">0</div><div style="position:absolute;left:612px;top:363px;width:40px;height:16px;background:#e7e7e7"></div><div class="t" style="left:432.00px;width:400px;text-align:center;top:366.84px;font-size:10px;line-height:10.0px;color:#222;font-weight:400;transform:scaleY(1.08);transform-origin:0 8.46px;-webkit-text-stroke:0.12px #222;">0</div><div style="position:absolute;left:653px;top:363px;width:40px;height:16px;background:#e7e7e7"></div><div class="t" style="left:473.00px;width:400px;text-align:center;top:366.84px;font-size:10px;line-height:10.0px;color:#222;font-weight:400;transform:scaleY(1.08);transform-origin:0 8.46px;-webkit-text-stroke:0.12px #222;">0</div><div style="position:absolute;left:694px;top:363px;width:39px;height:16px;background:#e7e7e7"></div><div class="t" style="left:513.50px;width:400px;text-align:center;top:366.84px;font-size:10px;line-height:10.0px;color:#222;font-weight:400;transform:scaleY(1.08);transform-origin:0 8.46px;-webkit-text-stroke:0.12px #222;">0</div><div style="position:absolute;left:734px;top:363px;width:69px;height:16px;background:#e7e7e7"></div><div class="t" style="left:568.50px;width:400px;text-align:center;top:366.84px;font-size:10px;line-height:10.0px;color:#222;font-weight:400;transform:scaleY(1.08);transform-origin:0 8.46px;-webkit-text-stroke:0.12px #222;">0</div><div style="position:absolute;left:449px;top:380px;width:40px;height:16px;background:#e7e7e7"></div><div class="t" style="left:269.00px;width:400px;text-align:center;top:383.84px;font-size:10px;line-height:10.0px;color:#222;font-weight:400;transform:scaleY(1.08);transform-origin:0 8.46px;-webkit-text-stroke:0.12px #222;">0</div><div style="position:absolute;left:490px;top:380px;width:40px;height:16px;background:#e7e7e7"></div><div class="t" style="left:310.00px;width:400px;text-align:center;top:383.84px;font-size:10px;line-height:10.0px;color:#222;font-weight:400;transform:scaleY(1.08);transform-origin:0 8.46px;-webkit-text-stroke:0.12px #222;">0</div><div style="position:absolute;left:531px;top:380px;width:40px;height:16px;background:#e7e7e7"></div><div class="t" style="left:351.00px;width:400px;text-align:center;top:383.84px;font-size:10px;line-height:10.0px;color:#222;font-weight:400;transform:scaleY(1.08);transform-origin:0 8.46px;-webkit-text-stroke:0.12px #222;">0</div><div style="position:absolute;left:572px;top:380px;width:39px;height:16px;background:#e7e7e7"></div><div class="t" style="left:391.50px;width:400px;text-align:center;top:383.84px;font-size:10px;line-height:10.0px;color:#222;font-weight:400;transform:scaleY(1.08);transform-origin:0 8.46px;-webkit-text-stroke:0.12px #222;">0</div><div style="position:absolute;left:612px;top:380px;width:40px;height:16px;background:#e7e7e7"></div><div class="t" style="left:432.00px;width:400px;text-align:center;top:383.84px;font-size:10px;line-height:10.0px;color:#222;font-weight:400;transform:scaleY(1.08);transform-origin:0 8.46px;-webkit-text-stroke:0.12px #222;">0</div><div style="position:absolute;left:653px;top:380px;width:40px;height:16px;background:#e7e7e7"></div><div class="t" style="left:473.00px;width:400px;text-align:center;top:383.84px;font-size:10px;line-height:10.0px;color:#222;font-weight:400;transform:scaleY(1.08);transform-origin:0 8.46px;-webkit-text-stroke:0.12px #222;">0</div><div style="position:absolute;left:694px;top:380px;width:39px;height:16px;background:#e7e7e7"></div><div class="t" style="left:513.50px;width:400px;text-align:center;top:383.84px;font-size:10px;line-height:10.0px;color:#222;font-weight:400;transform:scaleY(1.08);transform-origin:0 8.46px;-webkit-text-stroke:0.12px #222;">0</div><div style="position:absolute;left:734px;top:380px;width:69px;height:16px;background:#e7e7e7"></div><div class="t" style="left:568.50px;width:400px;text-align:center;top:383.84px;font-size:10px;line-height:10.0px;color:#222;font-weight:400;transform:scaleY(1.08);transform-origin:0 8.46px;-webkit-text-stroke:0.12px #222;">0</div><div style="position:absolute;left:449px;top:397px;width:40px;height:16px;background:#e7e7e7"></div><div class="t" style="left:269.00px;width:400px;text-align:center;top:399.84px;font-size:10px;line-height:10.0px;color:#222;font-weight:400;transform:scaleY(1.08);transform-origin:0 8.46px;-webkit-text-stroke:0.12px #222;">0</div><div style="position:absolute;left:490px;top:397px;width:40px;height:16px;background:#e7e7e7"></div><div class="t" style="left:310.00px;width:400px;text-align:center;top:399.84px;font-size:10px;line-height:10.0px;color:#222;font-weight:400;transform:scaleY(1.08);transform-origin:0 8.46px;-webkit-text-stroke:0.12px #222;">0</div><div style="position:absolute;left:531px;top:397px;width:40px;height:16px;background:#e7e7e7"></div><div class="t" style="left:351.00px;width:400px;text-align:center;top:399.84px;font-size:10px;line-height:10.0px;color:#222;font-weight:400;transform:scaleY(1.08);transform-origin:0 8.46px;-webkit-text-stroke:0.12px #222;">0</div><div style="position:absolute;left:572px;top:397px;width:39px;height:16px;background:#e7e7e7"></div><div class="t" style="left:391.50px;width:400px;text-align:center;top:399.84px;font-size:10px;line-height:10.0px;color:#222;font-weight:400;transform:scaleY(1.08);transform-origin:0 8.46px;-webkit-text-stroke:0.12px #222;">0</div><div style="position:absolute;left:612px;top:397px;width:40px;height:16px;background:#e7e7e7"></div><div class="t" style="left:432.00px;width:400px;text-align:center;top:399.84px;font-size:10px;line-height:10.0px;color:#222;font-weight:400;transform:scaleY(1.08);transform-origin:0 8.46px;-webkit-text-stroke:0.12px #222;">0</div><div style="position:absolute;left:653px;top:397px;width:40px;height:16px;background:#e7e7e7"></div><div class="t" style="left:473.00px;width:400px;text-align:center;top:399.84px;font-size:10px;line-height:10.0px;color:#222;font-weight:400;transform:scaleY(1.08);transform-origin:0 8.46px;-webkit-text-stroke:0.12px #222;">0</div><div style="position:absolute;left:694px;top:397px;width:39px;height:16px;background:#e7e7e7"></div><div class="t" style="left:513.50px;width:400px;text-align:center;top:399.84px;font-size:10px;line-height:10.0px;color:#222;font-weight:400;transform:scaleY(1.08);transform-origin:0 8.46px;-webkit-text-stroke:0.12px #222;">0</div><div style="position:absolute;left:734px;top:397px;width:69px;height:16px;background:#e7e7e7"></div><div class="t" style="left:568.50px;width:400px;text-align:center;top:399.84px;font-size:10px;line-height:10.0px;color:#222;font-weight:400;transform:scaleY(1.08);transform-origin:0 8.46px;-webkit-text-stroke:0.12px #222;">0</div><div style="position:absolute;left:449px;top:414px;width:40px;height:15px;background:#e7e7e7"></div><div class="t" style="left:269.00px;width:400px;text-align:center;top:417.84px;font-size:10px;line-height:10.0px;color:#222;font-weight:400;transform:scaleY(1.08);transform-origin:0 8.46px;-webkit-text-stroke:0.12px #222;">0</div><div style="position:absolute;left:490px;top:414px;width:40px;height:15px;background:#e7e7e7"></div><div class="t" style="left:310.00px;width:400px;text-align:center;top:417.84px;font-size:10px;line-height:10.0px;color:#222;font-weight:400;transform:scaleY(1.08);transform-origin:0 8.46px;-webkit-text-stroke:0.12px #222;">0</div><div style="position:absolute;left:531px;top:414px;width:40px;height:15px;background:#e7e7e7"></div><div class="t" style="left:351.00px;width:400px;text-align:center;top:417.84px;font-size:10px;line-height:10.0px;color:#222;font-weight:400;transform:scaleY(1.08);transform-origin:0 8.46px;-webkit-text-stroke:0.12px #222;">0</div><div style="position:absolute;left:572px;top:414px;width:39px;height:15px;background:#e7e7e7"></div><div class="t" style="left:391.50px;width:400px;text-align:center;top:417.84px;font-size:10px;line-height:10.0px;color:#222;font-weight:400;transform:scaleY(1.08);transform-origin:0 8.46px;-webkit-text-stroke:0.12px #222;">0</div><div style="position:absolute;left:612px;top:414px;width:40px;height:15px;background:#e7e7e7"></div><div class="t" style="left:432.00px;width:400px;text-align:center;top:417.84px;font-size:10px;line-height:10.0px;color:#222;font-weight:400;transform:scaleY(1.08);transform-origin:0 8.46px;-webkit-text-stroke:0.12px #222;">0</div><div style="position:absolute;left:653px;top:414px;width:40px;height:15px;background:#e7e7e7"></div><div class="t" style="left:473.00px;width:400px;text-align:center;top:417.84px;font-size:10px;line-height:10.0px;color:#222;font-weight:400;transform:scaleY(1.08);transform-origin:0 8.46px;-webkit-text-stroke:0.12px #222;">0</div><div style="position:absolute;left:694px;top:414px;width:39px;height:15px;background:#e7e7e7"></div><div class="t" style="left:513.50px;width:400px;text-align:center;top:417.84px;font-size:10px;line-height:10.0px;color:#222;font-weight:400;transform:scaleY(1.08);transform-origin:0 8.46px;-webkit-text-stroke:0.12px #222;">0</div><div style="position:absolute;left:734px;top:414px;width:69px;height:15px;background:#e7e7e7"></div><div class="t" style="left:568.50px;width:400px;text-align:center;top:417.84px;font-size:10px;line-height:10.0px;color:#222;font-weight:400;transform:scaleY(1.08);transform-origin:0 8.46px;-webkit-text-stroke:0.12px #222;">0</div><div style="position:absolute;left:449px;top:430px;width:40px;height:16px;background:#e7e7e7"></div><div class="t" style="left:269.00px;width:400px;text-align:center;top:434.84px;font-size:10px;line-height:10.0px;color:#222;font-weight:400;transform:scaleY(1.08);transform-origin:0 8.46px;-webkit-text-stroke:0.12px #222;">0</div><div style="position:absolute;left:490px;top:430px;width:40px;height:16px;background:#e7e7e7"></div><div class="t" style="left:310.00px;width:400px;text-align:center;top:434.84px;font-size:10px;line-height:10.0px;color:#222;font-weight:400;transform:scaleY(1.08);transform-origin:0 8.46px;-webkit-text-stroke:0.12px #222;">0</div><div style="position:absolute;left:531px;top:430px;width:40px;height:16px;background:#e7e7e7"></div><div class="t" style="left:351.00px;width:400px;text-align:center;top:434.84px;font-size:10px;line-height:10.0px;color:#222;font-weight:400;transform:scaleY(1.08);transform-origin:0 8.46px;-webkit-text-stroke:0.12px #222;">0</div><div style="position:absolute;left:572px;top:430px;width:39px;height:16px;background:#e7e7e7"></div><div class="t" style="left:391.50px;width:400px;text-align:center;top:434.84px;font-size:10px;line-height:10.0px;color:#222;font-weight:400;transform:scaleY(1.08);transform-origin:0 8.46px;-webkit-text-stroke:0.12px #222;">0</div><div style="position:absolute;left:612px;top:430px;width:40px;height:16px;background:#e7e7e7"></div><div class="t" style="left:432.00px;width:400px;text-align:center;top:434.84px;font-size:10px;line-height:10.0px;color:#222;font-weight:400;transform:scaleY(1.08);transform-origin:0 8.46px;-webkit-text-stroke:0.12px #222;">0</div><div style="position:absolute;left:653px;top:430px;width:40px;height:16px;background:#e7e7e7"></div><div class="t" style="left:473.00px;width:400px;text-align:center;top:434.84px;font-size:10px;line-height:10.0px;color:#222;font-weight:400;transform:scaleY(1.08);transform-origin:0 8.46px;-webkit-text-stroke:0.12px #222;">0</div><div style="position:absolute;left:694px;top:430px;width:39px;height:16px;background:#e7e7e7"></div><div class="t" style="left:513.50px;width:400px;text-align:center;top:434.84px;font-size:10px;line-height:10.0px;color:#222;font-weight:400;transform:scaleY(1.08);transform-origin:0 8.46px;-webkit-text-stroke:0.12px #222;">0</div><div style="position:absolute;left:734px;top:430px;width:69px;height:16px;background:#e7e7e7"></div><div class="t" style="left:568.50px;width:400px;text-align:center;top:434.84px;font-size:10px;line-height:10.0px;color:#222;font-weight:400;transform:scaleY(1.08);transform-origin:0 8.46px;-webkit-text-stroke:0.12px #222;">0</div><div style="position:absolute;left:449px;top:447px;width:40px;height:16px;background:#e7e7e7"></div><div class="t" style="left:269.00px;width:400px;text-align:center;top:450.84px;font-size:10px;line-height:10.0px;color:#222;font-weight:400;transform:scaleY(1.08);transform-origin:0 8.46px;-webkit-text-stroke:0.12px #222;">0</div><div style="position:absolute;left:490px;top:447px;width:40px;height:16px;background:#e7e7e7"></div><div class="t" style="left:310.00px;width:400px;text-align:center;top:450.84px;font-size:10px;line-height:10.0px;color:#222;font-weight:400;transform:scaleY(1.08);transform-origin:0 8.46px;-webkit-text-stroke:0.12px #222;">0</div><div style="position:absolute;left:531px;top:447px;width:40px;height:16px;background:#e7e7e7"></div><div class="t" style="left:351.00px;width:400px;text-align:center;top:450.84px;font-size:10px;line-height:10.0px;color:#222;font-weight:400;transform:scaleY(1.08);transform-origin:0 8.46px;-webkit-text-stroke:0.12px #222;">0</div><div style="position:absolute;left:572px;top:447px;width:39px;height:16px;background:#e7e7e7"></div><div class="t" style="left:391.50px;width:400px;text-align:center;top:450.84px;font-size:10px;line-height:10.0px;color:#222;font-weight:400;transform:scaleY(1.08);transform-origin:0 8.46px;-webkit-text-stroke:0.12px #222;">0</div><div style="position:absolute;left:612px;top:447px;width:40px;height:16px;background:#e7e7e7"></div><div class="t" style="left:432.00px;width:400px;text-align:center;top:450.84px;font-size:10px;line-height:10.0px;color:#222;font-weight:400;transform:scaleY(1.08);transform-origin:0 8.46px;-webkit-text-stroke:0.12px #222;">0</div><div style="position:absolute;left:653px;top:447px;width:40px;height:16px;background:#e7e7e7"></div><div class="t" style="left:473.00px;width:400px;text-align:center;top:450.84px;font-size:10px;line-height:10.0px;color:#222;font-weight:400;transform:scaleY(1.08);transform-origin:0 8.46px;-webkit-text-stroke:0.12px #222;">0</div><div style="position:absolute;left:694px;top:447px;width:39px;height:16px;background:#e7e7e7"></div><div class="t" style="left:513.50px;width:400px;text-align:center;top:450.84px;font-size:10px;line-height:10.0px;color:#222;font-weight:400;transform:scaleY(1.08);transform-origin:0 8.46px;-webkit-text-stroke:0.12px #222;">0</div><div style="position:absolute;left:734px;top:447px;width:69px;height:16px;background:#e7e7e7"></div><div class="t" style="left:568.50px;width:400px;text-align:center;top:450.84px;font-size:10px;line-height:10.0px;color:#222;font-weight:400;transform:scaleY(1.08);transform-origin:0 8.46px;-webkit-text-stroke:0.12px #222;">0</div><div style="position:absolute;left:449px;top:464px;width:40px;height:16px;background:#e7e7e7"></div><div class="t" style="left:269.00px;width:400px;text-align:center;top:467.84px;font-size:10px;line-height:10.0px;color:#222;font-weight:400;transform:scaleY(1.08);transform-origin:0 8.46px;-webkit-text-stroke:0.12px #222;">0</div><div style="position:absolute;left:490px;top:464px;width:40px;height:16px;background:#e7e7e7"></div><div class="t" style="left:310.00px;width:400px;text-align:center;top:467.84px;font-size:10px;line-height:10.0px;color:#222;font-weight:400;transform:scaleY(1.08);transform-origin:0 8.46px;-webkit-text-stroke:0.12px #222;">0</div><div style="position:absolute;left:531px;top:464px;width:40px;height:16px;background:#e7e7e7"></div><div class="t" style="left:351.00px;width:400px;text-align:center;top:467.84px;font-size:10px;line-height:10.0px;color:#222;font-weight:400;transform:scaleY(1.08);transform-origin:0 8.46px;-webkit-text-stroke:0.12px #222;">0</div><div style="position:absolute;left:572px;top:464px;width:39px;height:16px;background:#e7e7e7"></div><div class="t" style="left:391.50px;width:400px;text-align:center;top:467.84px;font-size:10px;line-height:10.0px;color:#222;font-weight:400;transform:scaleY(1.08);transform-origin:0 8.46px;-webkit-text-stroke:0.12px #222;">0</div><div style="position:absolute;left:612px;top:464px;width:40px;height:16px;background:#e7e7e7"></div><div class="t" style="left:432.00px;width:400px;text-align:center;top:467.84px;font-size:10px;line-height:10.0px;color:#222;font-weight:400;transform:scaleY(1.08);transform-origin:0 8.46px;-webkit-text-stroke:0.12px #222;">0</div><div style="position:absolute;left:653px;top:464px;width:40px;height:16px;background:#e7e7e7"></div><div class="t" style="left:473.00px;width:400px;text-align:center;top:467.84px;font-size:10px;line-height:10.0px;color:#222;font-weight:400;transform:scaleY(1.08);transform-origin:0 8.46px;-webkit-text-stroke:0.12px #222;">0</div><div style="position:absolute;left:694px;top:464px;width:39px;height:16px;background:#e7e7e7"></div><div class="t" style="left:513.50px;width:400px;text-align:center;top:467.84px;font-size:10px;line-height:10.0px;color:#222;font-weight:400;transform:scaleY(1.08);transform-origin:0 8.46px;-webkit-text-stroke:0.12px #222;">0</div><div style="position:absolute;left:734px;top:464px;width:69px;height:16px;background:#e7e7e7"></div><div class="t" style="left:568.50px;width:400px;text-align:center;top:467.84px;font-size:10px;line-height:10.0px;color:#222;font-weight:400;transform:scaleY(1.08);transform-origin:0 8.46px;-webkit-text-stroke:0.12px #222;">0</div><div style="position:absolute;left:449px;top:481px;width:40px;height:16px;background:#e7e7e7"></div><div class="t" style="left:269.00px;width:400px;text-align:center;top:484.84px;font-size:10px;line-height:10.0px;color:#222;font-weight:400;transform:scaleY(1.08);transform-origin:0 8.46px;-webkit-text-stroke:0.12px #222;">0</div><div style="position:absolute;left:490px;top:481px;width:40px;height:16px;background:#e7e7e7"></div><div class="t" style="left:310.00px;width:400px;text-align:center;top:484.84px;font-size:10px;line-height:10.0px;color:#222;font-weight:400;transform:scaleY(1.08);transform-origin:0 8.46px;-webkit-text-stroke:0.12px #222;">0</div><div style="position:absolute;left:531px;top:481px;width:40px;height:16px;background:#e7e7e7"></div><div class="t" style="left:351.00px;width:400px;text-align:center;top:484.84px;font-size:10px;line-height:10.0px;color:#222;font-weight:400;transform:scaleY(1.08);transform-origin:0 8.46px;-webkit-text-stroke:0.12px #222;">0</div><div style="position:absolute;left:572px;top:481px;width:39px;height:16px;background:#e7e7e7"></div><div class="t" style="left:391.50px;width:400px;text-align:center;top:484.84px;font-size:10px;line-height:10.0px;color:#222;font-weight:400;transform:scaleY(1.08);transform-origin:0 8.46px;-webkit-text-stroke:0.12px #222;">0</div><div style="position:absolute;left:612px;top:481px;width:40px;height:16px;background:#e7e7e7"></div><div class="t" style="left:432.00px;width:400px;text-align:center;top:484.84px;font-size:10px;line-height:10.0px;color:#222;font-weight:400;transform:scaleY(1.08);transform-origin:0 8.46px;-webkit-text-stroke:0.12px #222;">0</div><div style="position:absolute;left:653px;top:481px;width:40px;height:16px;background:#e7e7e7"></div><div class="t" style="left:473.00px;width:400px;text-align:center;top:484.84px;font-size:10px;line-height:10.0px;color:#222;font-weight:400;transform:scaleY(1.08);transform-origin:0 8.46px;-webkit-text-stroke:0.12px #222;">0</div><div style="position:absolute;left:694px;top:481px;width:39px;height:16px;background:#e7e7e7"></div><div class="t" style="left:513.50px;width:400px;text-align:center;top:484.84px;font-size:10px;line-height:10.0px;color:#222;font-weight:400;transform:scaleY(1.08);transform-origin:0 8.46px;-webkit-text-stroke:0.12px #222;">0</div><div style="position:absolute;left:734px;top:481px;width:69px;height:16px;background:#e7e7e7"></div><div class="t" style="left:568.50px;width:400px;text-align:center;top:484.84px;font-size:10px;line-height:10.0px;color:#222;font-weight:400;transform:scaleY(1.08);transform-origin:0 8.46px;-webkit-text-stroke:0.12px #222;">0</div><div style="position:absolute;left:449px;top:498px;width:40px;height:16px;background:#e7e7e7"></div><div class="t" style="left:269.00px;width:400px;text-align:center;top:501.84px;font-size:10px;line-height:10.0px;color:#222;font-weight:400;transform:scaleY(1.08);transform-origin:0 8.46px;-webkit-text-stroke:0.12px #222;">0</div><div style="position:absolute;left:490px;top:498px;width:40px;height:16px;background:#e7e7e7"></div><div class="t" style="left:310.00px;width:400px;text-align:center;top:501.84px;font-size:10px;line-height:10.0px;color:#222;font-weight:400;transform:scaleY(1.08);transform-origin:0 8.46px;-webkit-text-stroke:0.12px #222;">0</div><div style="position:absolute;left:531px;top:498px;width:40px;height:16px;background:#e7e7e7"></div><div class="t" style="left:351.00px;width:400px;text-align:center;top:501.84px;font-size:10px;line-height:10.0px;color:#222;font-weight:400;transform:scaleY(1.08);transform-origin:0 8.46px;-webkit-text-stroke:0.12px #222;">0</div><div style="position:absolute;left:572px;top:498px;width:39px;height:16px;background:#e7e7e7"></div><div class="t" style="left:391.50px;width:400px;text-align:center;top:501.84px;font-size:10px;line-height:10.0px;color:#222;font-weight:400;transform:scaleY(1.08);transform-origin:0 8.46px;-webkit-text-stroke:0.12px #222;">0</div><div style="position:absolute;left:612px;top:498px;width:40px;height:16px;background:#e7e7e7"></div><div class="t" style="left:432.00px;width:400px;text-align:center;top:501.84px;font-size:10px;line-height:10.0px;color:#222;font-weight:400;transform:scaleY(1.08);transform-origin:0 8.46px;-webkit-text-stroke:0.12px #222;">0</div><div style="position:absolute;left:653px;top:498px;width:40px;height:16px;background:#e7e7e7"></div><div class="t" style="left:473.00px;width:400px;text-align:center;top:501.84px;font-size:10px;line-height:10.0px;color:#222;font-weight:400;transform:scaleY(1.08);transform-origin:0 8.46px;-webkit-text-stroke:0.12px #222;">0</div><div style="position:absolute;left:694px;top:498px;width:39px;height:16px;background:#e7e7e7"></div><div class="t" style="left:513.50px;width:400px;text-align:center;top:501.84px;font-size:10px;line-height:10.0px;color:#222;font-weight:400;transform:scaleY(1.08);transform-origin:0 8.46px;-webkit-text-stroke:0.12px #222;">0</div><div style="position:absolute;left:734px;top:498px;width:69px;height:16px;background:#e7e7e7"></div><div class="t" style="left:568.50px;width:400px;text-align:center;top:501.84px;font-size:10px;line-height:10.0px;color:#222;font-weight:400;transform:scaleY(1.08);transform-origin:0 8.46px;-webkit-text-stroke:0.12px #222;">0</div><div style="position:absolute;left:449px;top:515px;width:40px;height:16px;background:#e7e7e7"></div><div class="t" style="left:269.00px;width:400px;text-align:center;top:518.83px;font-size:10px;line-height:10.0px;color:#222;font-weight:400;transform:scaleY(1.08);transform-origin:0 8.46px;-webkit-text-stroke:0.12px #222;">0</div><div style="position:absolute;left:490px;top:515px;width:40px;height:16px;background:#e7e7e7"></div><div class="t" style="left:310.00px;width:400px;text-align:center;top:518.83px;font-size:10px;line-height:10.0px;color:#222;font-weight:400;transform:scaleY(1.08);transform-origin:0 8.46px;-webkit-text-stroke:0.12px #222;">0</div><div style="position:absolute;left:531px;top:515px;width:40px;height:16px;background:#e7e7e7"></div><div class="t" style="left:351.00px;width:400px;text-align:center;top:518.83px;font-size:10px;line-height:10.0px;color:#222;font-weight:400;transform:scaleY(1.08);transform-origin:0 8.46px;-webkit-text-stroke:0.12px #222;">0</div><div style="position:absolute;left:572px;top:515px;width:39px;height:16px;background:#e7e7e7"></div><div class="t" style="left:391.50px;width:400px;text-align:center;top:518.83px;font-size:10px;line-height:10.0px;color:#222;font-weight:400;transform:scaleY(1.08);transform-origin:0 8.46px;-webkit-text-stroke:0.12px #222;">0</div><div style="position:absolute;left:612px;top:515px;width:40px;height:16px;background:#e7e7e7"></div><div class="t" style="left:432.00px;width:400px;text-align:center;top:518.83px;font-size:10px;line-height:10.0px;color:#222;font-weight:400;transform:scaleY(1.08);transform-origin:0 8.46px;-webkit-text-stroke:0.12px #222;">0</div><div style="position:absolute;left:653px;top:515px;width:40px;height:16px;background:#e7e7e7"></div><div class="t" style="left:473.00px;width:400px;text-align:center;top:518.83px;font-size:10px;line-height:10.0px;color:#222;font-weight:400;transform:scaleY(1.08);transform-origin:0 8.46px;-webkit-text-stroke:0.12px #222;">0</div><div style="position:absolute;left:694px;top:515px;width:39px;height:16px;background:#e7e7e7"></div><div class="t" style="left:513.50px;width:400px;text-align:center;top:518.83px;font-size:10px;line-height:10.0px;color:#222;font-weight:400;transform:scaleY(1.08);transform-origin:0 8.46px;-webkit-text-stroke:0.12px #222;">0</div><div style="position:absolute;left:734px;top:515px;width:69px;height:16px;background:#e7e7e7"></div><div class="t" style="left:568.50px;width:400px;text-align:center;top:518.83px;font-size:10px;line-height:10.0px;color:#222;font-weight:400;transform:scaleY(1.08);transform-origin:0 8.46px;-webkit-text-stroke:0.12px #222;">0</div><div style="position:absolute;left:449px;top:532px;width:40px;height:16px;background:#e7e7e7"></div><div class="t" style="left:269.00px;width:400px;text-align:center;top:535.83px;font-size:10px;line-height:10.0px;color:#222;font-weight:400;transform:scaleY(1.08);transform-origin:0 8.46px;-webkit-text-stroke:0.12px #222;">0</div><div style="position:absolute;left:490px;top:532px;width:40px;height:16px;background:#e7e7e7"></div><div class="t" style="left:310.00px;width:400px;text-align:center;top:535.83px;font-size:10px;line-height:10.0px;color:#222;font-weight:400;transform:scaleY(1.08);transform-origin:0 8.46px;-webkit-text-stroke:0.12px #222;">0</div><div style="position:absolute;left:531px;top:532px;width:40px;height:16px;background:#e7e7e7"></div><div class="t" style="left:351.00px;width:400px;text-align:center;top:535.83px;font-size:10px;line-height:10.0px;color:#222;font-weight:400;transform:scaleY(1.08);transform-origin:0 8.46px;-webkit-text-stroke:0.12px #222;">0</div><div style="position:absolute;left:572px;top:532px;width:39px;height:16px;background:#e7e7e7"></div><div class="t" style="left:391.50px;width:400px;text-align:center;top:535.83px;font-size:10px;line-height:10.0px;color:#222;font-weight:400;transform:scaleY(1.08);transform-origin:0 8.46px;-webkit-text-stroke:0.12px #222;">0</div><div style="position:absolute;left:612px;top:532px;width:40px;height:16px;background:#e7e7e7"></div><div class="t" style="left:432.00px;width:400px;text-align:center;top:535.83px;font-size:10px;line-height:10.0px;color:#222;font-weight:400;transform:scaleY(1.08);transform-origin:0 8.46px;-webkit-text-stroke:0.12px #222;">0</div><div style="position:absolute;left:653px;top:532px;width:40px;height:16px;background:#e7e7e7"></div><div class="t" style="left:473.00px;width:400px;text-align:center;top:535.83px;font-size:10px;line-height:10.0px;color:#222;font-weight:400;transform:scaleY(1.08);transform-origin:0 8.46px;-webkit-text-stroke:0.12px #222;">0</div><div style="position:absolute;left:694px;top:532px;width:39px;height:16px;background:#e7e7e7"></div><div class="t" style="left:513.50px;width:400px;text-align:center;top:535.83px;font-size:10px;line-height:10.0px;color:#222;font-weight:400;transform:scaleY(1.08);transform-origin:0 8.46px;-webkit-text-stroke:0.12px #222;">0</div><div style="position:absolute;left:734px;top:532px;width:69px;height:16px;background:#e7e7e7"></div><div class="t" style="left:568.50px;width:400px;text-align:center;top:535.83px;font-size:10px;line-height:10.0px;color:#222;font-weight:400;transform:scaleY(1.08);transform-origin:0 8.46px;-webkit-text-stroke:0.12px #222;">0</div><div style="position:absolute;left:449px;top:549px;width:40px;height:16px;background:#e7e7e7"></div><div class="t" style="left:269.00px;width:400px;text-align:center;top:551.83px;font-size:10px;line-height:10.0px;color:#222;font-weight:400;transform:scaleY(1.08);transform-origin:0 8.46px;-webkit-text-stroke:0.12px #222;">0</div><div style="position:absolute;left:490px;top:549px;width:40px;height:16px;background:#e7e7e7"></div><div class="t" style="left:310.00px;width:400px;text-align:center;top:551.83px;font-size:10px;line-height:10.0px;color:#222;font-weight:400;transform:scaleY(1.08);transform-origin:0 8.46px;-webkit-text-stroke:0.12px #222;">0</div><div style="position:absolute;left:531px;top:549px;width:40px;height:16px;background:#e7e7e7"></div><div class="t" style="left:351.00px;width:400px;text-align:center;top:551.83px;font-size:10px;line-height:10.0px;color:#222;font-weight:400;transform:scaleY(1.08);transform-origin:0 8.46px;-webkit-text-stroke:0.12px #222;">0</div><div style="position:absolute;left:572px;top:549px;width:39px;height:16px;background:#e7e7e7"></div><div class="t" style="left:391.50px;width:400px;text-align:center;top:551.83px;font-size:10px;line-height:10.0px;color:#222;font-weight:400;transform:scaleY(1.08);transform-origin:0 8.46px;-webkit-text-stroke:0.12px #222;">0</div><div style="position:absolute;left:612px;top:549px;width:40px;height:16px;background:#e7e7e7"></div><div class="t" style="left:432.00px;width:400px;text-align:center;top:551.83px;font-size:10px;line-height:10.0px;color:#222;font-weight:400;transform:scaleY(1.08);transform-origin:0 8.46px;-webkit-text-stroke:0.12px #222;">0</div><div style="position:absolute;left:653px;top:549px;width:40px;height:16px;background:#e7e7e7"></div><div class="t" style="left:473.00px;width:400px;text-align:center;top:551.83px;font-size:10px;line-height:10.0px;color:#222;font-weight:400;transform:scaleY(1.08);transform-origin:0 8.46px;-webkit-text-stroke:0.12px #222;">0</div><div style="position:absolute;left:694px;top:549px;width:39px;height:16px;background:#e7e7e7"></div><div class="t" style="left:513.50px;width:400px;text-align:center;top:551.83px;font-size:10px;line-height:10.0px;color:#222;font-weight:400;transform:scaleY(1.08);transform-origin:0 8.46px;-webkit-text-stroke:0.12px #222;">0</div><div style="position:absolute;left:734px;top:549px;width:69px;height:16px;background:#e7e7e7"></div><div class="t" style="left:568.50px;width:400px;text-align:center;top:551.83px;font-size:10px;line-height:10.0px;color:#222;font-weight:400;transform:scaleY(1.08);transform-origin:0 8.46px;-webkit-text-stroke:0.12px #222;">0</div><div style="position:absolute;left:489px;top:328px;width:1px;height:237px;background:#b3ad7c"></div><div style="position:absolute;left:530px;top:328px;width:1px;height:237px;background:#b3ad7c"></div><div style="position:absolute;left:571px;top:328px;width:1px;height:237px;background:#b3ad7c"></div><div style="position:absolute;left:611px;top:328px;width:1px;height:237px;background:#b3ad7c"></div><div style="position:absolute;left:652px;top:328px;width:1px;height:237px;background:#b3ad7c"></div><div style="position:absolute;left:693px;top:328px;width:1px;height:237px;background:#b3ad7c"></div><div style="position:absolute;left:733px;top:328px;width:1px;height:237px;background:#b3ad7c"></div><div style="position:absolute;left:489px;top:293px;width:1px;height:35px;background:#b3ad7c"></div><div style="position:absolute;left:530px;top:293px;width:1px;height:35px;background:#b3ad7c"></div><div style="position:absolute;left:571px;top:293px;width:1px;height:35px;background:#b3ad7c"></div><div style="position:absolute;left:611px;top:293px;width:1px;height:35px;background:#b3ad7c"></div><div style="position:absolute;left:652px;top:293px;width:1px;height:35px;background:#b3ad7c"></div><div style="position:absolute;left:693px;top:260px;width:1px;height:68px;background:#b3ad7c"></div><div style="position:absolute;left:733px;top:260px;width:1px;height:68px;background:#b3ad7c"></div><div style="position:absolute;left:449px;top:328px;width:354px;height:1px;background:#d8d4ae"></div><div style="position:absolute;left:449px;top:345px;width:354px;height:1px;background:#d8d4ae"></div><div style="position:absolute;left:449px;top:362px;width:354px;height:1px;background:#d8d4ae"></div><div style="position:absolute;left:449px;top:379px;width:354px;height:1px;background:#d8d4ae"></div><div style="position:absolute;left:449px;top:396px;width:354px;height:1px;background:#d8d4ae"></div><div style="position:absolute;left:449px;top:413px;width:354px;height:1px;background:#d8d4ae"></div><div style="position:absolute;left:449px;top:429px;width:354px;height:1px;background:#d8d4ae"></div><div style="position:absolute;left:449px;top:446px;width:354px;height:1px;background:#d8d4ae"></div><div style="position:absolute;left:449px;top:463px;width:354px;height:1px;background:#d8d4ae"></div><div style="position:absolute;left:449px;top:480px;width:354px;height:1px;background:#d8d4ae"></div><div style="position:absolute;left:449px;top:497px;width:354px;height:1px;background:#d8d4ae"></div><div style="position:absolute;left:449px;top:514px;width:354px;height:1px;background:#d8d4ae"></div><div style="position:absolute;left:449px;top:531px;width:354px;height:1px;background:#d8d4ae"></div><div style="position:absolute;left:449px;top:548px;width:354px;height:1px;background:#d8d4ae"></div><div style="position:absolute;left:449px;top:565px;width:354px;height:1px;background:#d8d4ae"></div><div style="position:absolute;left:259px;top:362px;width:189px;height:1px;background:#d8d4ae"></div><div style="position:absolute;left:300px;top:379px;width:148px;height:1px;background:#d8d4ae"></div><div style="position:absolute;left:330px;top:396px;width:118px;height:1px;background:#d8d4ae"></div><div style="position:absolute;left:330px;top:413px;width:118px;height:1px;background:#d8d4ae"></div><div style="position:absolute;left:330px;top:429px;width:118px;height:1px;background:#d8d4ae"></div><div style="position:absolute;left:330px;top:446px;width:118px;height:1px;background:#d8d4ae"></div><div style="position:absolute;left:330px;top:463px;width:118px;height:1px;background:#d8d4ae"></div><div style="position:absolute;left:330px;top:480px;width:118px;height:1px;background:#d8d4ae"></div><div style="position:absolute;left:327px;top:531px;width:121px;height:1px;background:#d8d4ae"></div><div style="position:absolute;left:270px;top:548px;width:178px;height:1px;background:#d8d4ae"></div><div style="position:absolute;left:327px;top:564px;width:121px;height:1px;background:#d8d4ae"></div><div style="position:absolute;left:216px;top:259px;width:587px;height:1px;background:#3a3a33"></div><div style="position:absolute;left:216px;top:259px;width:1px;height:306px;background:#3a3a33"></div><div style="position:absolute;left:448px;top:259px;width:1px;height:306px;background:#3a3a33"></div><div style="position:absolute;left:802px;top:259px;width:1px;height:306px;background:#3a3a33"></div><div style="position:absolute;left:216px;top:328px;width:587px;height:1px;background:#3a3a33"></div><div style="position:absolute;left:216px;top:345px;width:587px;height:1px;background:#3a3a33"></div><div style="position:absolute;left:216px;top:497px;width:587px;height:1px;background:#3a3a33"></div><div style="position:absolute;left:216px;top:514px;width:587px;height:1px;background:#3a3a33"></div><div class="t" style="left:219.40px;top:269.85px;font-size:8.8px;line-height:8.8px;color:#333;font-weight:400;transform:scaleY(1.12);transform-origin:0 7.45px;">Wohnort der Schüler<span style='font-size:4px;position:relative;top:-4px'>1)</span></div><div class="t" style="left:219.40px;top:282.87px;font-size:7.6px;line-height:7.6px;color:#333;font-weight:400;transform:scaleY(1.12);transform-origin:0 6.43px;">Reihenfolge<span style='font-size:4px;position:relative;top:-3px'>2)</span></div><div class="t" style="left:219.40px;top:291.78px;font-size:7.7px;line-height:7.7px;color:#333;font-weight:400;transform:scaleY(1.12);transform-origin:0 6.52px;">1. Kreis;</div><div class="t" style="left:219.40px;top:300.78px;font-size:7.7px;line-height:7.7px;color:#333;font-weight:400;transform:scaleY(1.12);transform-origin:0 6.52px;">2. Gemeinden alphabetisch:</div><div class="t" style="left:228.60px;top:309.78px;font-size:7.7px;line-height:7.7px;color:#333;font-weight:400;transform:scaleY(1.12);transform-origin:0 6.52px;">(Schulort zuerst; Ortsteile getrennt aufführen)</div><div class="t" style="left:370.80px;width:400px;text-align:center;top:266.85px;font-size:8.8px;line-height:8.8px;color:#333;font-weight:400;transform:scaleY(1.12);transform-origin:0 7.45px;">Zahl der Schüler aus nebenstehenden Orten in</div><div class="t" style="left:370.80px;width:400px;text-align:center;top:277.85px;font-size:8.8px;line-height:8.8px;color:#333;font-weight:400;transform:scaleY(1.12);transform-origin:0 7.45px;"><span style='letter-spacing:2.8px'>Klassenstufe</span>&nbsp;&nbsp;(ohne VKL)</div><div class="t" style="left:269.00px;width:400px;text-align:center;top:310.26px;font-size:9.5px;line-height:9.5px;color:#333;font-weight:400;transform:scaleY(1.12);transform-origin:0 8.04px;">5</div><div class="t" style="left:310.00px;width:400px;text-align:center;top:310.26px;font-size:9.5px;line-height:9.5px;color:#333;font-weight:400;transform:scaleY(1.12);transform-origin:0 8.04px;">6</div><div class="t" style="left:351.00px;width:400px;text-align:center;top:310.26px;font-size:9.5px;line-height:9.5px;color:#333;font-weight:400;transform:scaleY(1.12);transform-origin:0 8.04px;">7</div><div class="t" style="left:391.50px;width:400px;text-align:center;top:310.26px;font-size:9.5px;line-height:9.5px;color:#333;font-weight:400;transform:scaleY(1.12);transform-origin:0 8.04px;">8</div><div class="t" style="left:432.00px;width:400px;text-align:center;top:310.26px;font-size:9.5px;line-height:9.5px;color:#333;font-weight:400;transform:scaleY(1.12);transform-origin:0 8.04px;">9</div><div class="t" style="left:473.00px;width:400px;text-align:center;top:310.26px;font-size:9.5px;line-height:9.5px;color:#333;font-weight:400;transform:scaleY(1.12);transform-origin:0 8.04px;">10</div><div class="t" style="left:513.20px;width:400px;text-align:center;top:279.68px;font-size:9px;line-height:9.0px;color:#333;font-weight:400;transform:scaleY(1.12);transform-origin:0 7.62px;">Vorbe-</div><div class="t" style="left:513.20px;width:400px;text-align:center;top:289.68px;font-size:9px;line-height:9.0px;color:#333;font-weight:400;transform:scaleY(1.12);transform-origin:0 7.62px;">reitungs-</div><div class="t" style="left:513.20px;width:400px;text-align:center;top:300.68px;font-size:9px;line-height:9.0px;color:#333;font-weight:400;transform:scaleY(1.12);transform-origin:0 7.62px;">klassen</div><div class="t" style="left:568.00px;width:400px;text-align:center;top:289.68px;font-size:9px;line-height:9.0px;color:#333;font-weight:400;transform:scaleY(1.12);transform-origin:0 7.62px;">zusammen</div><div class="t" style="left:219.80px;top:334.94px;font-size:8.7px;line-height:8.7px;color:#222;font-weight:700;transform:scaleY(1.12);transform-origin:0 7.36px;">Schüler insgesamt</div><div class="t" style="left:219.60px;top:350.77px;font-size:8.9px;line-height:8.9px;color:#222;font-weight:400;transform:scaleY(1.12);transform-origin:0 7.53px;">Darunter</div><div class="t" style="left:258.90px;top:350.94px;font-size:8.7px;line-height:8.7px;color:#222;font-weight:700;transform:scaleY(1.12);transform-origin:0 7.36px;">Migrationshintergrund</div><div class="t" style="left:258.90px;top:367.77px;font-size:8.9px;line-height:8.9px;color:#222;font-weight:400;transform:scaleY(1.12);transform-origin:0 7.53px;">Darunter</div><div class="t" style="left:299.70px;top:367.94px;font-size:8.7px;line-height:8.7px;color:#222;font-weight:700;transform:scaleY(1.12);transform-origin:0 7.36px;">Ausländer insgesamt</div><div class="t" style="left:299.70px;top:386.77px;font-size:8.9px;line-height:8.9px;color:#222;font-weight:400;transform:scaleY(1.12);transform-origin:0 7.53px;">Davon</div><div class="t" style="left:330.00px;top:386.77px;font-size:8.9px;line-height:8.9px;color:#222;font-weight:400;transform:scaleY(1.12);transform-origin:0 7.53px;">Griechen</div><div class="t" style="left:330.00px;top:402.77px;font-size:8.9px;line-height:8.9px;color:#222;font-weight:400;transform:scaleY(1.12);transform-origin:0 7.53px;">Italiener</div><div class="t" style="left:330.00px;top:418.77px;font-size:8.9px;line-height:8.9px;color:#222;font-weight:400;transform:scaleY(1.12);transform-origin:0 7.53px;">Serben</div><div class="t" style="left:330.00px;top:434.77px;font-size:8.9px;line-height:8.9px;color:#222;font-weight:400;transform:scaleY(1.12);transform-origin:0 7.53px;">Kroaten</div><div class="t" style="left:330.00px;top:450.77px;font-size:8.9px;line-height:8.9px;color:#222;font-weight:400;transform:scaleY(1.12);transform-origin:0 7.53px;">Kosovaren</div><div class="t" style="left:330.00px;top:467.77px;font-size:8.9px;line-height:8.9px;color:#222;font-weight:400;transform:scaleY(1.12);transform-origin:0 7.53px;">Türken</div><div class="t" style="left:330.00px;top:483.77px;font-size:8.9px;line-height:8.9px;color:#222;font-weight:400;transform:scaleY(1.12);transform-origin:0 7.53px;">sonstige Ausländer</div><div class="t" style="left:219.50px;top:501.94px;font-size:8.7px;line-height:8.7px;color:#222;font-weight:700;transform:scaleY(1.12);transform-origin:0 7.36px;">Klassen insgesamt</div><div class="t" style="left:273.00px;top:516.77px;font-size:8.9px;line-height:8.9px;color:#222;font-weight:400;transform:scaleY(1.12);transform-origin:0 7.53px;">in</div><div class="t" style="left:330.00px;top:516.77px;font-size:8.9px;line-height:8.9px;color:#222;font-weight:400;transform:scaleY(1.12);transform-origin:0 7.53px;">Schüler</div><div class="t" style="left:330.00px;top:534.77px;font-size:8.9px;line-height:8.9px;color:#222;font-weight:400;transform:scaleY(1.12);transform-origin:0 7.53px;">Klassen</div><div class="t" style="left:273.00px;top:550.77px;font-size:8.9px;line-height:8.9px;color:#222;font-weight:400;transform:scaleY(1.12);transform-origin:0 7.53px;">in</div><div class="t" style="left:330.00px;top:550.77px;font-size:8.9px;line-height:8.9px;color:#222;font-weight:400;transform:scaleY(1.12);transform-origin:0 7.53px;">Schüler</div><div style="position:absolute;left:270px;top:532px;width:56px;height:15px;background:#ffff00;border:1px solid #d6d6c0;box-sizing:border-box"></div><div class="t" style="font-size:7.6px;line-height:8.7px;color:#333;transform:rotate(-90deg);transform-origin:center;width:60px;height:17.4px;left:213.5px;top:538.5px;text-align:center">ausgelagerte<br>Klassen<span style="font-size:4px;position:relative;top:-3px">3)</span></div></body></html>
